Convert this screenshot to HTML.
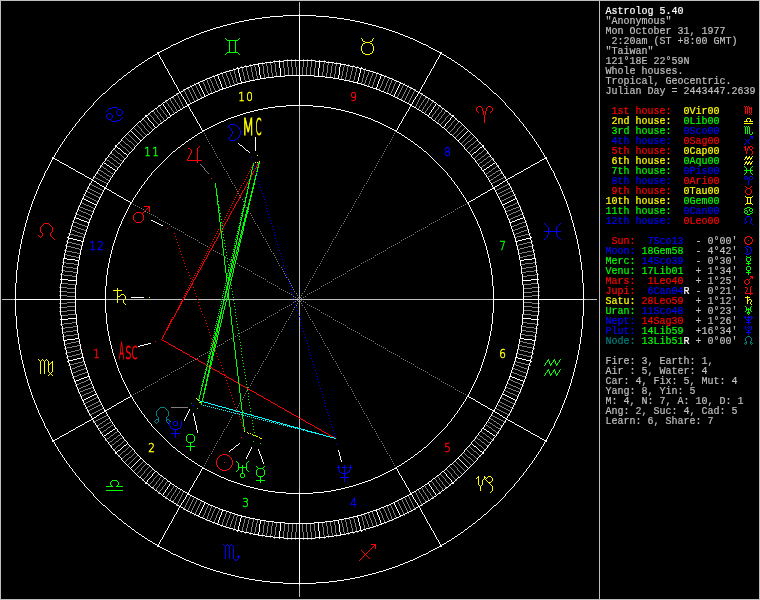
<!DOCTYPE html>
<html><head><meta charset="utf-8"><title>Astrolog 5.40</title>
<style>
html,body{margin:0;padding:0;background:#000}
#chart{will-change:transform;position:relative;width:760px;height:600px;background:#000;overflow:hidden}
#chart svg{position:absolute;left:0;top:0}
#chart svg path{fill:none;stroke-width:1;shape-rendering:crispEdges}
#chart svg text{stroke-width:.45px;vector-effect:non-scaling-stroke}
.hn{font:12.3px "DejaVu Sans Light","Liberation Sans",sans-serif;text-anchor:middle}
.lb2{font:12px "DejaVu Sans Light","Liberation Sans",sans-serif}
#side{position:absolute;left:605.5px;top:7px;margin:0;font:10px/10px "Liberation Mono",monospace;color:#bfbfbf;white-space:pre;-webkit-text-stroke:.2px}
</style></head><body>
<div id="chart">
<svg width="760" height="600" viewBox="0 0 760 600">
<path class="frame" stroke="#bfbfbf" d="M0 0.5h760M0 599.5h760M0.5 1v598M599.5 1v598M759.5 1v598"/>
<path class="axes" stroke="#bfbfbf" d="M2 299.5h595M299.5 2v297M299.5 300v297"/>
<path class="ticks1" stroke="#7f7f7f" d="M129 141.5h2M468 141.5h2M126 144.5h2M471 144.5h2M123 147.5h2M474 147.5h2M118 153.5h2M479 153.5h2M486 153.5h2M112 154.5h2M482 156.5h2M488 156.5h2M110 157.5h2M116 157.5h2M478 159.5h2M484 159.5h2M491 159.5h2M107 160.5h2M114 160.5h2M120 160.5h2M480 162.5h2M487 162.5h2M111 163.5h2M118 163.5h2M483 165.5h2M101 166.5h2M115 166.5h2M496 166.5h2M104 168.5h2M493 168.5h2M99 170.5h2M498 170.5h2M101 171.5h2M108 171.5h2M489 171.5h2M496 171.5h2M97 173.5h2M104 173.5h2M111 173.5h2M486 173.5h2M493 173.5h2M500 173.5h2M100 175.5h2M107 175.5h2M490 175.5h2M497 175.5h2M109 176.5h2M488 176.5h2M94 177.5h2M103 177.5h2M494 177.5h2M503 177.5h2M96 178.5h2M501 178.5h2M98 179.5h2M106 179.5h2M491 179.5h2M499 179.5h2M100 180.5h2M497 180.5h2M102 181.5h2M495 181.5h2M104 182.5h2M493 182.5h2M90 184.5h2M507 184.5h2M92 185.5h2M505 185.5h2M94 186.5h2M503 186.5h2M96 187.5h2M501 187.5h2M510 187.5h2M88 188.5h2M98 188.5h2M499 188.5h2M508 188.5h2M90 189.5h2M100 189.5h2M497 189.5h2M506 189.5h2M92 190.5h2M504 190.5h2M512 190.5h2M86 191.5h2M94 191.5h2M502 191.5h2M510 191.5h2M88 192.5h2M96 192.5h2M500 192.5h2M508 192.5h2M90 193.5h2M98 193.5h2M498 193.5h2M506 193.5h2M92 194.5h2M100 194.5h2M504 194.5h2M514 194.5h2M84 195.5h2M94 195.5h2M502 195.5h2M512 195.5h2M86 196.5h2M96 196.5h2M500 196.5h2M510 196.5h2M88 197.5h2M98 197.5h2M508 197.5h2M90 198.5h2M506 198.5h2M92 199.5h2M504 199.5h2M94 200.5h2M502 200.5h2M96 201.5h2M80 202.5h2M517 202.5h2M82 203.5h2M515 203.5h2M84 204.5h2M513 204.5h2M86 205.5h3M510 205.5h3M78 206.5h2M89 206.5h2M508 206.5h2M519 206.5h2M80 207.5h3M91 207.5h2M506 207.5h2M516 207.5h3M83 208.5h2M93 208.5h2M504 208.5h2M513 208.5h3M77 209.5h2M85 209.5h3M511 209.5h2M520 209.5h2M79 210.5h2M88 210.5h3M508 210.5h3M518 210.5h2M81 211.5h2M91 211.5h2M506 211.5h2M516 211.5h2M83 212.5h3M513 212.5h3M75 213.5h2M86 213.5h2M511 213.5h2M522 213.5h2M77 214.5h2M88 214.5h2M509 214.5h2M520 214.5h2M79 215.5h2M90 215.5h2M507 215.5h2M518 215.5h2M81 216.5h3M515 216.5h3M84 217.5h2M513 217.5h2M86 218.5h2M511 218.5h2M88 219.5h2M509 219.5h2M72 221.5h2M525 221.5h2M74 222.5h3M522 222.5h3M77 223.5h2M519 223.5h3M79 224.5h3M517 224.5h2M71 225.5h2M82 225.5h3M514 225.5h3M526 225.5h2M73 226.5h3M85 226.5h2M512 226.5h2M523 226.5h3M76 227.5h2M520 227.5h3M78 228.5h3M518 228.5h2M70 229.5h2M81 229.5h3M515 229.5h3M527 229.5h2M72 230.5h3M84 230.5h2M513 230.5h2M524 230.5h3M75 231.5h2M521 231.5h3M77 232.5h3M519 232.5h2M68 233.5h2M80 233.5h3M516 233.5h3M529 233.5h2M70 234.5h4M83 234.5h2M514 234.5h2M525 234.5h4M74 235.5h4M521 235.5h4M78 236.5h4M517 236.5h4M82 237.5h2M515 237.5h2M66 241.5h2M531 241.5h2M68 242.5h4M527 242.5h4M72 243.5h4M523 243.5h4M76 244.5h4M519 244.5h4M65 245.5h2M80 245.5h2M517 245.5h2M532 245.5h2M67 246.5h4M528 246.5h4M71 247.5h4M524 247.5h4M75 248.5h4M520 248.5h4M79 249.5h2M518 249.5h2M64 250.5h3M532 250.5h3M67 251.5h5M527 251.5h5M72 252.5h5M522 252.5h5M77 253.5h3M519 253.5h3M64 254.5h3M532 254.5h3M67 255.5h4M527 255.5h5M71 256.5h5M523 256.5h4M76 257.5h3M520 257.5h3M62 262.5h4M533 262.5h4M66 263.5h8M525 263.5h8M74 264.5h4M521 264.5h4M62 266.5h4M533 266.5h4M66 267.5h7M526 267.5h7M73 268.5h4M522 268.5h4M61 270.5h4M534 270.5h4M65 271.5h8M526 271.5h8M73 272.5h4M522 272.5h4M60 274.5h4M535 274.5h4M64 275.5h8M527 275.5h8M72 276.5h4M523 276.5h4M60 283.5h8M531 283.5h8M68 284.5h8M523 284.5h8M59 287.5h8M532 287.5h8M67 288.5h8M524 288.5h8M59 291.5h8M532 291.5h8M67 292.5h8M524 292.5h8M59 295.5h8M532 295.5h8M67 296.5h8M524 296.5h8M67 302.5h8M524 302.5h8M59 303.5h8M532 303.5h8M67 306.5h8M524 306.5h8M59 307.5h8M532 307.5h8M67 310.5h8M524 310.5h8M59 311.5h8M532 311.5h8M68 314.5h8M523 314.5h8M60 315.5h8M531 315.5h8M72 322.5h4M523 322.5h4M64 323.5h8M527 323.5h8M60 324.5h4M535 324.5h4M73 326.5h4M522 326.5h4M65 327.5h8M526 327.5h8M61 328.5h4M534 328.5h4M73 330.5h4M522 330.5h4M66 331.5h7M526 331.5h7M62 332.5h4M533 332.5h4M74 334.5h4M521 334.5h4M66 335.5h8M525 335.5h8M62 336.5h4M533 336.5h4M76 341.5h3M520 341.5h3M71 342.5h5M523 342.5h4M67 343.5h4M527 343.5h5M64 344.5h3M532 344.5h3M77 345.5h3M519 345.5h3M72 346.5h5M522 346.5h5M67 347.5h5M527 347.5h5M64 348.5h3M532 348.5h3M79 349.5h2M518 349.5h2M75 350.5h4M520 350.5h4M71 351.5h4M524 351.5h4M67 352.5h4M528 352.5h4M65 353.5h2M80 353.5h2M517 353.5h2M532 353.5h2M76 354.5h4M519 354.5h4M72 355.5h4M523 355.5h4M68 356.5h4M527 356.5h4M66 357.5h2M531 357.5h2M82 361.5h2M515 361.5h2M78 362.5h4M517 362.5h4M74 363.5h4M521 363.5h4M70 364.5h4M83 364.5h2M514 364.5h2M525 364.5h4M68 365.5h2M80 365.5h3M516 365.5h3M529 365.5h2M77 366.5h3M519 366.5h2M75 367.5h2M521 367.5h3M72 368.5h3M84 368.5h2M513 368.5h2M524 368.5h3M70 369.5h2M81 369.5h3M515 369.5h3M527 369.5h2M78 370.5h3M518 370.5h2M76 371.5h2M520 371.5h3M73 372.5h3M85 372.5h2M512 372.5h2M523 372.5h3M71 373.5h2M82 373.5h3M514 373.5h3M526 373.5h2M79 374.5h3M517 374.5h2M77 375.5h2M519 375.5h3M74 376.5h3M522 376.5h3M72 377.5h2M525 377.5h2M88 379.5h2M509 379.5h2M86 380.5h2M511 380.5h2M84 381.5h2M513 381.5h2M81 382.5h3M515 382.5h3M79 383.5h2M90 383.5h2M507 383.5h2M518 383.5h2M77 384.5h2M88 384.5h2M509 384.5h2M520 384.5h2M75 385.5h2M86 385.5h2M511 385.5h2M522 385.5h2M83 386.5h3M513 386.5h3M81 387.5h2M91 387.5h2M506 387.5h2M516 387.5h2M79 388.5h2M88 388.5h3M508 388.5h3M518 388.5h2M77 389.5h2M85 389.5h3M511 389.5h2M520 389.5h2M83 390.5h2M93 390.5h2M504 390.5h2M513 390.5h3M80 391.5h3M91 391.5h2M506 391.5h2M516 391.5h3M78 392.5h2M89 392.5h2M508 392.5h2M519 392.5h2M86 393.5h3M510 393.5h3M84 394.5h2M513 394.5h2M82 395.5h2M515 395.5h2M80 396.5h2M517 396.5h2M96 397.5h2M94 398.5h2M502 398.5h2M92 399.5h2M504 399.5h2M90 400.5h2M506 400.5h2M88 401.5h2M98 401.5h2M508 401.5h2M86 402.5h2M96 402.5h2M500 402.5h2M510 402.5h2M84 403.5h2M94 403.5h2M502 403.5h2M512 403.5h2M92 404.5h2M100 404.5h2M504 404.5h2M514 404.5h2M90 405.5h2M98 405.5h2M498 405.5h2M506 405.5h2M88 406.5h2M96 406.5h2M500 406.5h2M508 406.5h2M86 407.5h2M94 407.5h2M502 407.5h2M510 407.5h2M92 408.5h2M504 408.5h2M512 408.5h2M90 409.5h2M100 409.5h2M497 409.5h2M506 409.5h2M88 410.5h2M98 410.5h2M499 410.5h2M508 410.5h2M96 411.5h2M501 411.5h2M510 411.5h2M94 412.5h2M503 412.5h2M92 413.5h2M505 413.5h2M90 414.5h2M507 414.5h2M104 416.5h2M493 416.5h2M102 417.5h2M495 417.5h2M100 418.5h2M497 418.5h2M98 419.5h2M106 419.5h2M491 419.5h2M499 419.5h2M96 420.5h2M501 420.5h2M94 421.5h2M103 421.5h2M494 421.5h2M503 421.5h2M109 422.5h2M488 422.5h2M100 423.5h2M107 423.5h2M490 423.5h2M497 423.5h2M97 425.5h2M104 425.5h2M111 425.5h2M486 425.5h2M493 425.5h2M500 425.5h2M101 427.5h2M108 427.5h2M489 427.5h2M496 427.5h2M99 428.5h2M498 428.5h2M104 430.5h2M493 430.5h2M101 432.5h2M115 432.5h2M496 432.5h2M483 433.5h2M111 435.5h2M118 435.5h2M480 436.5h2M487 436.5h2M107 438.5h2M114 438.5h2M120 438.5h2M478 439.5h2M484 439.5h2M491 439.5h2M110 441.5h2M116 441.5h2M482 442.5h2M488 442.5h2M112 444.5h2M118 445.5h2M479 445.5h2M486 445.5h2M123 451.5h2M474 451.5h2M126 454.5h2M471 454.5h2M129 457.5h2M468 457.5h2M83.5 194v1M83.5 404v1M85.5 190v1M85.5 408v1M87.5 187v1M87.5 411v1M89.5 183v1M89.5 415v1M93.5 176v1M93.5 422v1M96.5 172v1M96.5 426v1M98.5 169v1M98.5 429v1M99.5 174v1M99.5 424v1M100.5 165v1M100.5 433v1M102.5 176v1M102.5 190v1M102.5 408v1M102.5 422v1M103.5 167v1M103.5 172v1M103.5 426v1M103.5 431v1M105.5 158v1M105.5 178v1M105.5 420v1M105.5 440v1M106.5 159v1M106.5 169v1M106.5 174v1M106.5 183v1M106.5 415v1M106.5 424v1M106.5 429v1M106.5 439v1M107.5 170v1M107.5 428v1M108.5 155v1M108.5 180v1M108.5 418v1M108.5 443v1M109.5 156v1M109.5 161v1M109.5 437v1M109.5 442v1M110.5 152v1M110.5 162v1M110.5 172v1M110.5 426v1M110.5 436v1M110.5 446v1M111.5 153v1M111.5 177v1M111.5 421v1M111.5 445v1M112.5 158v1M112.5 440v1M113.5 148v1M113.5 159v1M113.5 164v1M113.5 174v1M113.5 424v1M113.5 434v1M113.5 439v1M113.5 450v1M114.5 149v1M114.5 155v1M114.5 165v1M114.5 433v1M114.5 443v1M114.5 449v1M115.5 150v1M115.5 156v1M115.5 442v1M115.5 448v1M116.5 151v1M116.5 161v1M116.5 437v1M116.5 447v1M117.5 152v1M117.5 162v1M117.5 167v1M117.5 431v1M117.5 436v1M117.5 446v1M118.5 142v1M118.5 158v1M118.5 440v1M118.5 456v1M119.5 143v1M119.5 159v1M119.5 439v1M119.5 455v1M120.5 144v1M120.5 154v1M120.5 164v1M120.5 434v1M120.5 444v1M120.5 454v1M121.5 139v1M121.5 145v1M121.5 155v1M121.5 443v1M121.5 453v1M121.5 459v1M122.5 140v1M122.5 146v1M122.5 156v1M122.5 161v1M122.5 437v1M122.5 442v1M122.5 452v1M122.5 458v1M123.5 141v1M123.5 157v1M123.5 441v1M123.5 457v1M124.5 136v1M124.5 142v1M124.5 158v1M124.5 440v1M124.5 456v1M124.5 462v1M125.5 137v1M125.5 143v1M125.5 148v1M125.5 450v1M125.5 455v1M125.5 461v1M126.5 138v1M126.5 149v1M126.5 449v1M126.5 460v1M127.5 133v1M127.5 139v1M127.5 150v1M127.5 448v1M127.5 459v1M127.5 465v1M128.5 134v1M128.5 140v1M128.5 145v1M128.5 151v1M128.5 447v1M128.5 453v1M128.5 458v1M128.5 464v1M129.5 135v1M129.5 146v1M129.5 152v1M129.5 446v1M129.5 452v1M129.5 463v1M130.5 136v1M130.5 147v1M130.5 451v1M130.5 462v1M131.5 137v1M131.5 142v1M131.5 148v1M131.5 450v1M131.5 456v1M131.5 461v1M132.5 138v1M132.5 143v1M132.5 149v1M132.5 449v1M132.5 455v1M132.5 460v1M133.5 127v1M133.5 139v1M133.5 144v1M133.5 454v1M133.5 459v1M133.5 471v1M134.5 128v1M134.5 140v1M134.5 145v1M134.5 453v1M134.5 458v1M134.5 470v1M135.5 129v1M135.5 141v1M135.5 146v1M135.5 452v1M135.5 457v1M135.5 469v1M136.5 124v1M136.5 130v1M136.5 142v1M136.5 456v1M136.5 468v1M136.5 474v1M137.5 125v1M137.5 131v1M137.5 143v1M137.5 455v1M137.5 467v1M137.5 473v1M138.5 126v1M138.5 132v1M138.5 466v1M138.5 472v1M139.5 121v1M139.5 127v1M139.5 133v1M139.5 465v1M139.5 471v1M139.5 477v1M140.5 122v1M140.5 128v1M140.5 134v1M140.5 464v1M140.5 470v1M140.5 476v1M141.5 123v1M141.5 129v2M141.5 135v1M141.5 463v1M141.5 468v2M141.5 475v1M142.5 118v1M142.5 124v1M142.5 131v1M142.5 136v1M142.5 462v1M142.5 467v1M142.5 474v1M142.5 480v1M143.5 119v1M143.5 125v1M143.5 132v1M143.5 137v1M143.5 461v1M143.5 466v1M143.5 473v1M143.5 479v1M144.5 120v1M144.5 126v2M144.5 133v1M144.5 465v1M144.5 471v2M144.5 478v1M145.5 121v1M145.5 128v1M145.5 134v1M145.5 464v1M145.5 470v1M145.5 477v1M146.5 122v1M146.5 129v1M146.5 135v1M146.5 463v1M146.5 469v1M146.5 476v1M147.5 123v2M147.5 130v1M147.5 468v1M147.5 474v2M148.5 113v1M148.5 125v1M148.5 131v1M148.5 467v1M148.5 473v1M148.5 485v1M149.5 114v1M149.5 126v1M149.5 132v1M149.5 466v1M149.5 472v1M149.5 484v1M150.5 115v1M150.5 127v1M150.5 471v1M150.5 483v1M151.5 116v1M151.5 128v1M151.5 470v1M151.5 482v1M152.5 110v1M152.5 117v1M152.5 129v1M152.5 469v1M152.5 481v1M152.5 488v1M153.5 111v1M153.5 118v2M153.5 479v2M153.5 486v2M154.5 112v2M154.5 120v1M154.5 478v1M154.5 485v1M155.5 108v1M155.5 114v1M155.5 121v1M155.5 477v1M155.5 484v1M155.5 490v1M156.5 109v1M156.5 115v1M156.5 122v1M156.5 476v1M156.5 482v2M156.5 488v2M157.5 110v2M157.5 116v2M157.5 123v1M157.5 475v1M157.5 481v1M157.5 487v1M158.5 105v1M158.5 112v1M158.5 118v1M158.5 124v1M158.5 474v1M158.5 480v1M158.5 486v1M158.5 493v1M159.5 106v1M159.5 113v1M159.5 119v1M159.5 478v2M159.5 484v2M159.5 491v2M160.5 107v2M160.5 114v2M160.5 120v2M160.5 477v1M160.5 483v1M160.5 490v1M161.5 109v1M161.5 116v1M161.5 122v1M161.5 476v1M161.5 482v1M161.5 489v1M162.5 110v1M162.5 117v1M162.5 480v2M162.5 487v2M163.5 111v2M163.5 118v2M163.5 479v1M163.5 486v1M164.5 113v1M164.5 120v1M164.5 478v1M164.5 485v1M165.5 100v1M165.5 114v1M165.5 483v2M165.5 498v1M166.5 101v2M166.5 115v2M166.5 482v1M166.5 496v2M167.5 103v1M167.5 117v1M167.5 481v1M167.5 495v1M168.5 104v2M168.5 493v2M169.5 98v1M169.5 106v1M169.5 492v1M169.5 500v1M170.5 99v2M170.5 107v1M170.5 491v1M170.5 498v2M171.5 101v2M171.5 108v2M171.5 489v2M171.5 496v2M172.5 96v1M172.5 103v1M172.5 110v1M172.5 488v1M172.5 495v1M172.5 502v1M173.5 97v2M173.5 104v2M173.5 111v2M173.5 486v2M173.5 493v2M173.5 500v2M174.5 99v1M174.5 106v1M174.5 113v1M174.5 485v1M174.5 492v1M174.5 499v1M175.5 100v2M175.5 107v2M175.5 490v2M175.5 497v2M176.5 93v1M176.5 102v1M176.5 109v2M176.5 488v2M176.5 496v1M176.5 505v1M177.5 94v2M177.5 103v2M177.5 111v1M177.5 487v1M177.5 494v2M177.5 503v2M178.5 96v2M178.5 105v1M178.5 493v1M178.5 501v2M179.5 98v2M179.5 106v2M179.5 491v2M179.5 499v2M180.5 100v2M180.5 108v1M180.5 490v1M180.5 497v2M181.5 102v2M181.5 495v2M182.5 104v2M182.5 493v2M183.5 89v1M183.5 106v1M183.5 492v1M183.5 509v1M184.5 90v2M184.5 507v2M185.5 92v2M185.5 505v2M186.5 94v2M186.5 503v2M187.5 87v1M187.5 96v2M187.5 501v2M187.5 510v2M188.5 88v2M188.5 98v2M188.5 499v2M188.5 508v2M189.5 90v2M189.5 100v2M189.5 497v2M189.5 506v2M190.5 85v1M190.5 92v2M190.5 102v1M190.5 496v1M190.5 504v2M190.5 512v2M191.5 86v2M191.5 94v2M191.5 502v2M191.5 510v2M192.5 88v2M192.5 96v2M192.5 500v2M192.5 508v2M193.5 90v2M193.5 98v2M193.5 498v2M193.5 506v2M194.5 83v1M194.5 92v2M194.5 100v2M194.5 497v1M194.5 504v2M194.5 514v2M195.5 84v2M195.5 94v2M195.5 502v2M195.5 512v2M196.5 86v2M196.5 96v2M196.5 500v2M196.5 510v2M197.5 88v2M197.5 98v2M197.5 499v1M197.5 508v2M198.5 90v2M198.5 506v2M199.5 92v2M199.5 504v2M200.5 94v2M200.5 502v2M201.5 96v2M201.5 501v1M202.5 80v2M202.5 517v2M203.5 82v2M203.5 515v2M204.5 84v2M204.5 513v2M205.5 86v3M205.5 510v3M206.5 78v2M206.5 89v2M206.5 508v2M206.5 519v2M207.5 80v3M207.5 91v2M207.5 506v2M207.5 516v3M208.5 83v2M208.5 93v2M208.5 504v2M208.5 513v3M209.5 77v2M209.5 85v3M209.5 511v2M209.5 520v2M210.5 79v2M210.5 88v3M210.5 508v3M210.5 518v2M211.5 81v2M211.5 91v2M211.5 506v2M211.5 516v2M212.5 83v3M212.5 513v3M213.5 75v2M213.5 86v2M213.5 511v2M213.5 522v2M214.5 77v2M214.5 88v2M214.5 509v2M214.5 520v2M215.5 79v2M215.5 90v2M215.5 507v2M215.5 518v2M216.5 81v3M216.5 515v3M217.5 84v2M217.5 513v2M218.5 86v2M218.5 511v2M219.5 88v2M219.5 509v2M221.5 72v2M221.5 525v2M222.5 74v3M222.5 522v3M223.5 77v2M223.5 519v3M224.5 79v3M224.5 517v2M225.5 71v2M225.5 82v3M225.5 514v3M225.5 526v2M226.5 73v3M226.5 85v2M226.5 512v2M226.5 523v3M227.5 76v2M227.5 520v3M228.5 78v3M228.5 518v2M229.5 70v2M229.5 81v3M229.5 515v3M229.5 527v2M230.5 72v3M230.5 84v2M230.5 513v2M230.5 524v3M231.5 75v2M231.5 521v3M232.5 77v3M232.5 519v2M233.5 68v2M233.5 80v3M233.5 516v3M233.5 529v2M234.5 70v4M234.5 83v2M234.5 514v2M234.5 525v4M235.5 74v4M235.5 521v4M236.5 78v4M236.5 517v4M237.5 82v2M237.5 515v2M241.5 66v2M241.5 531v2M242.5 68v4M242.5 527v4M243.5 72v4M243.5 523v4M244.5 76v4M244.5 519v4M245.5 65v2M245.5 80v2M245.5 517v2M245.5 532v2M246.5 67v4M246.5 528v4M247.5 71v4M247.5 524v4M248.5 75v4M248.5 520v4M249.5 79v2M249.5 518v2M250.5 64v3M250.5 532v3M251.5 67v5M251.5 527v5M252.5 72v5M252.5 522v5M253.5 77v3M253.5 519v3M254.5 64v3M254.5 532v3M255.5 67v4M255.5 527v5M256.5 71v5M256.5 523v4M257.5 76v3M257.5 520v3M262.5 62v4M262.5 533v4M263.5 66v8M263.5 525v8M264.5 74v4M264.5 521v4M266.5 62v4M266.5 533v4M267.5 66v7M267.5 526v7M268.5 73v4M268.5 522v4M270.5 61v4M270.5 534v4M271.5 65v8M271.5 526v8M272.5 73v4M272.5 522v4M274.5 60v4M274.5 535v4M275.5 64v8M275.5 527v8M276.5 72v4M276.5 523v4M283.5 60v8M283.5 531v8M284.5 68v8M284.5 523v8M287.5 59v8M287.5 532v8M288.5 67v8M288.5 524v8M291.5 59v8M291.5 532v8M292.5 67v8M292.5 524v8M295.5 59v8M295.5 532v8M296.5 67v8M296.5 524v8M302.5 67v8M302.5 524v8M303.5 59v8M303.5 532v8M306.5 67v8M306.5 524v8M307.5 59v8M307.5 532v8M310.5 67v8M310.5 524v8M311.5 59v8M311.5 532v8M314.5 68v8M314.5 523v8M315.5 60v8M315.5 531v8M322.5 72v4M322.5 523v4M323.5 64v8M323.5 527v8M324.5 60v4M324.5 535v4M326.5 73v4M326.5 522v4M327.5 65v8M327.5 526v8M328.5 61v4M328.5 534v4M330.5 73v4M330.5 522v4M331.5 66v7M331.5 526v7M332.5 62v4M332.5 533v4M334.5 74v4M334.5 521v4M335.5 66v8M335.5 525v8M336.5 62v4M336.5 533v4M341.5 76v3M341.5 520v3M342.5 71v5M342.5 523v4M343.5 67v4M343.5 527v5M344.5 64v3M344.5 532v3M345.5 77v3M345.5 519v3M346.5 72v5M346.5 522v5M347.5 67v5M347.5 527v5M348.5 64v3M348.5 532v3M349.5 79v2M349.5 518v2M350.5 75v4M350.5 520v4M351.5 71v4M351.5 524v4M352.5 67v4M352.5 528v4M353.5 65v2M353.5 80v2M353.5 517v2M353.5 532v2M354.5 76v4M354.5 519v4M355.5 72v4M355.5 523v4M356.5 68v4M356.5 527v4M357.5 66v2M357.5 531v2M361.5 82v2M361.5 515v2M362.5 78v4M362.5 517v4M363.5 74v4M363.5 521v4M364.5 70v4M364.5 83v2M364.5 514v2M364.5 525v4M365.5 68v2M365.5 80v3M365.5 516v3M365.5 529v2M366.5 77v3M366.5 519v2M367.5 75v2M367.5 521v3M368.5 72v3M368.5 84v2M368.5 513v2M368.5 524v3M369.5 70v2M369.5 81v3M369.5 515v3M369.5 527v2M370.5 78v3M370.5 518v2M371.5 76v2M371.5 520v3M372.5 73v3M372.5 85v2M372.5 512v2M372.5 523v3M373.5 71v2M373.5 82v3M373.5 514v3M373.5 526v2M374.5 79v3M374.5 517v2M375.5 77v2M375.5 519v3M376.5 74v3M376.5 522v3M377.5 72v2M377.5 525v2M379.5 88v2M379.5 509v2M380.5 86v2M380.5 511v2M381.5 84v2M381.5 513v2M382.5 81v3M382.5 515v3M383.5 79v2M383.5 90v2M383.5 507v2M383.5 518v2M384.5 77v2M384.5 88v2M384.5 509v2M384.5 520v2M385.5 75v2M385.5 86v2M385.5 511v2M385.5 522v2M386.5 83v3M386.5 513v3M387.5 81v2M387.5 91v2M387.5 506v2M387.5 516v2M388.5 79v2M388.5 88v3M388.5 508v3M388.5 518v2M389.5 77v2M389.5 85v3M389.5 511v2M389.5 520v2M390.5 83v2M390.5 93v2M390.5 504v2M390.5 513v3M391.5 80v3M391.5 91v2M391.5 506v2M391.5 516v3M392.5 78v2M392.5 89v2M392.5 508v2M392.5 519v2M393.5 86v3M393.5 510v3M394.5 84v2M394.5 513v2M395.5 82v2M395.5 515v2M396.5 80v2M396.5 517v2M397.5 96v2M397.5 501v1M398.5 94v2M398.5 502v2M399.5 92v2M399.5 504v2M400.5 90v2M400.5 506v2M401.5 88v2M401.5 98v2M401.5 499v1M401.5 508v2M402.5 86v2M402.5 96v2M402.5 500v2M402.5 510v2M403.5 84v2M403.5 94v2M403.5 502v2M403.5 512v2M404.5 83v1M404.5 92v2M404.5 100v2M404.5 497v1M404.5 504v2M404.5 514v2M405.5 90v2M405.5 98v2M405.5 498v2M405.5 506v2M406.5 88v2M406.5 96v2M406.5 500v2M406.5 508v2M407.5 86v2M407.5 94v2M407.5 502v2M407.5 510v2M408.5 85v1M408.5 92v2M408.5 102v1M408.5 496v1M408.5 504v2M408.5 512v2M409.5 90v2M409.5 100v2M409.5 497v2M409.5 506v2M410.5 88v2M410.5 98v2M410.5 499v2M410.5 508v2M411.5 87v1M411.5 96v2M411.5 501v2M411.5 510v2M412.5 94v2M412.5 503v2M413.5 92v2M413.5 505v2M414.5 90v2M414.5 507v2M415.5 89v1M415.5 106v1M415.5 492v1M415.5 509v1M416.5 104v2M416.5 493v2M417.5 102v2M417.5 495v2M418.5 100v2M418.5 108v1M418.5 490v1M418.5 497v2M419.5 98v2M419.5 106v2M419.5 491v2M419.5 499v2M420.5 96v2M420.5 105v1M420.5 493v1M420.5 501v2M421.5 94v2M421.5 103v2M421.5 111v1M421.5 487v1M421.5 494v2M421.5 503v2M422.5 93v1M422.5 102v1M422.5 109v2M422.5 488v2M422.5 496v1M422.5 505v1M423.5 100v2M423.5 107v2M423.5 490v2M423.5 497v2M424.5 99v1M424.5 106v1M424.5 113v1M424.5 485v1M424.5 492v1M424.5 499v1M425.5 97v2M425.5 104v2M425.5 111v2M425.5 486v2M425.5 493v2M425.5 500v2M426.5 96v1M426.5 103v1M426.5 110v1M426.5 488v1M426.5 495v1M426.5 502v1M427.5 101v2M427.5 108v2M427.5 489v2M427.5 496v2M428.5 99v2M428.5 107v1M428.5 491v1M428.5 498v2M429.5 98v1M429.5 106v1M429.5 492v1M429.5 500v1M430.5 104v2M430.5 493v2M431.5 103v1M431.5 117v1M431.5 481v1M431.5 495v1M432.5 101v2M432.5 115v2M432.5 482v1M432.5 496v2M433.5 100v1M433.5 114v1M433.5 483v2M433.5 498v1M434.5 113v1M434.5 120v1M434.5 478v1M434.5 485v1M435.5 111v2M435.5 118v2M435.5 479v1M435.5 486v1M436.5 110v1M436.5 117v1M436.5 480v2M436.5 487v2M437.5 109v1M437.5 116v1M437.5 122v1M437.5 476v1M437.5 482v1M437.5 489v1M438.5 107v2M438.5 114v2M438.5 120v2M438.5 477v1M438.5 483v1M438.5 490v1M439.5 106v1M439.5 113v1M439.5 119v1M439.5 478v2M439.5 484v2M439.5 491v2M440.5 105v1M440.5 112v1M440.5 118v1M440.5 124v1M440.5 474v1M440.5 480v1M440.5 486v1M440.5 493v1M441.5 110v2M441.5 116v2M441.5 123v1M441.5 475v1M441.5 481v1M441.5 487v1M442.5 109v1M442.5 115v1M442.5 122v1M442.5 476v1M442.5 482v2M442.5 488v2M443.5 108v1M443.5 114v1M443.5 121v1M443.5 477v1M443.5 484v1M443.5 490v1M444.5 112v2M444.5 120v1M444.5 478v1M444.5 485v1M445.5 111v1M445.5 118v2M445.5 479v2M445.5 486v2M446.5 110v1M446.5 117v1M446.5 129v1M446.5 469v1M446.5 481v1M446.5 488v1M447.5 116v1M447.5 128v1M447.5 470v1M447.5 482v1M448.5 115v1M448.5 127v1M448.5 471v1M448.5 483v1M449.5 114v1M449.5 126v1M449.5 132v1M449.5 466v1M449.5 472v1M449.5 484v1M450.5 113v1M450.5 125v1M450.5 131v1M450.5 467v1M450.5 473v1M450.5 485v1M451.5 123v2M451.5 130v1M451.5 468v1M451.5 474v2M452.5 122v1M452.5 129v1M452.5 135v1M452.5 463v1M452.5 469v1M452.5 476v1M453.5 121v1M453.5 128v1M453.5 134v1M453.5 464v1M453.5 470v1M453.5 477v1M454.5 120v1M454.5 126v2M454.5 133v1M454.5 465v1M454.5 471v2M454.5 478v1M455.5 119v1M455.5 125v1M455.5 132v1M455.5 137v1M455.5 461v1M455.5 466v1M455.5 473v1M455.5 479v1M456.5 118v1M456.5 124v1M456.5 131v1M456.5 136v1M456.5 462v1M456.5 467v1M456.5 474v1M456.5 480v1M457.5 123v1M457.5 129v2M457.5 135v1M457.5 463v1M457.5 468v2M457.5 475v1M458.5 122v1M458.5 128v1M458.5 134v1M458.5 464v1M458.5 470v1M458.5 476v1M459.5 121v1M459.5 127v1M459.5 133v1M459.5 465v1M459.5 471v1M459.5 477v1M460.5 126v1M460.5 132v1M460.5 466v1M460.5 472v1M461.5 125v1M461.5 131v1M461.5 143v1M461.5 455v1M461.5 467v1M461.5 473v1M462.5 124v1M462.5 130v1M462.5 142v1M462.5 456v1M462.5 468v1M462.5 474v1M463.5 129v1M463.5 141v1M463.5 146v1M463.5 452v1M463.5 457v1M463.5 469v1M464.5 128v1M464.5 140v1M464.5 145v1M464.5 453v1M464.5 458v1M464.5 470v1M465.5 127v1M465.5 139v1M465.5 144v1M465.5 454v1M465.5 459v1M465.5 471v1M466.5 138v1M466.5 143v1M466.5 149v1M466.5 449v1M466.5 455v1M466.5 460v1M467.5 137v1M467.5 142v1M467.5 148v1M467.5 450v1M467.5 456v1M467.5 461v1M468.5 136v1M468.5 147v1M468.5 451v1M468.5 462v1M469.5 135v1M469.5 146v1M469.5 152v1M469.5 446v1M469.5 452v1M469.5 463v1M470.5 134v1M470.5 140v1M470.5 145v1M470.5 151v1M470.5 447v1M470.5 453v1M470.5 458v1M470.5 464v1M471.5 133v1M471.5 139v1M471.5 150v1M471.5 448v1M471.5 459v1M471.5 465v1M472.5 138v1M472.5 149v1M472.5 449v1M472.5 460v1M473.5 137v1M473.5 143v1M473.5 148v1M473.5 450v1M473.5 455v1M473.5 461v1M474.5 136v1M474.5 142v1M474.5 158v1M474.5 440v1M474.5 456v1M474.5 462v1M475.5 141v1M475.5 157v1M475.5 441v1M475.5 457v1M476.5 140v1M476.5 146v1M476.5 156v1M476.5 161v1M476.5 437v1M476.5 442v1M476.5 452v1M476.5 458v1M477.5 139v1M477.5 145v1M477.5 155v1M477.5 160v1M477.5 438v1M477.5 443v1M477.5 453v1M477.5 459v1M478.5 144v1M478.5 154v1M478.5 164v1M478.5 434v1M478.5 444v1M478.5 454v1M479.5 143v1M479.5 163v1M479.5 435v1M479.5 455v1M480.5 142v1M480.5 158v1M480.5 440v1M480.5 456v1M481.5 152v1M481.5 157v1M481.5 167v1M481.5 431v1M481.5 441v1M481.5 446v1M482.5 151v1M482.5 161v1M482.5 166v1M482.5 432v1M482.5 437v1M482.5 447v1M483.5 150v1M483.5 160v1M483.5 438v1M483.5 448v1M484.5 149v1M484.5 155v1M484.5 443v1M484.5 449v1M485.5 148v1M485.5 154v1M485.5 164v1M485.5 174v1M485.5 424v1M485.5 434v1M485.5 444v1M485.5 450v1M486.5 158v1M486.5 163v1M486.5 435v1M486.5 440v1M487.5 157v1M487.5 177v1M487.5 421v1M487.5 441v1M488.5 152v1M488.5 172v1M488.5 426v1M488.5 446v1M489.5 161v1M489.5 437v1M490.5 155v1M490.5 160v1M490.5 180v1M490.5 418v1M490.5 438v1M490.5 443v1M491.5 170v1M491.5 428v1M492.5 169v1M492.5 174v1M492.5 183v1M492.5 415v1M492.5 424v1M492.5 429v1M493.5 158v1M493.5 178v1M493.5 420v1M493.5 440v1M495.5 167v1M495.5 172v1M495.5 426v1M495.5 431v1M496.5 176v1M496.5 190v1M496.5 408v1M496.5 422v1M497.5 194v1M497.5 404v1M498.5 165v1M498.5 433v1M499.5 174v1M499.5 197v1M499.5 401v1M499.5 424v1M500.5 169v1M500.5 429v1M501.5 201v1M501.5 397v1M502.5 172v1M502.5 426v1M505.5 176v1M505.5 422v1M509.5 183v1M509.5 415v1"/>
<path class="ticks5" stroke="#fff" d="M480 147.5h2M118 148.5h2M474 152.5h2M124 153.5h2M104 163.5h2M493 163.5h2M107 165.5h2M490 165.5h2M110 167.5h2M487 167.5h2M113 169.5h2M484 169.5h2M92 180.5h2M505 180.5h2M94 181.5h2M503 181.5h2M97 183.5h2M500 183.5h2M100 185.5h2M497 185.5h2M102 186.5h2M495 186.5h2M82 198.5h2M515 198.5h2M84 199.5h2M513 199.5h2M86 200.5h2M511 200.5h2M88 201.5h2M509 201.5h2M90 202.5h2M507 202.5h2M92 203.5h2M505 203.5h2M94 204.5h2M503 204.5h2M74 217.5h2M523 217.5h2M76 218.5h3M520 218.5h3M79 219.5h2M517 219.5h3M81 220.5h3M515 220.5h2M84 221.5h3M512 221.5h3M87 222.5h2M510 222.5h2M67 237.5h2M530 237.5h2M69 238.5h4M526 238.5h4M73 239.5h4M522 239.5h4M77 240.5h4M518 240.5h4M81 241.5h2M516 241.5h2M63 258.5h4M532 258.5h4M67 259.5h8M524 259.5h8M75 260.5h4M520 260.5h4M60 279.5h8M531 279.5h8M68 280.5h8M523 280.5h8M59 299.5h16M524 299.5h16M68 318.5h8M523 318.5h8M60 319.5h8M531 319.5h8M75 338.5h4M520 338.5h4M67 339.5h8M524 339.5h8M63 340.5h4M532 340.5h4M81 357.5h2M516 357.5h2M77 358.5h4M518 358.5h4M73 359.5h4M522 359.5h4M69 360.5h4M526 360.5h4M67 361.5h2M530 361.5h2M87 376.5h2M510 376.5h2M84 377.5h3M512 377.5h3M81 378.5h3M515 378.5h2M79 379.5h2M517 379.5h3M76 380.5h3M520 380.5h3M74 381.5h2M523 381.5h2M94 394.5h2M503 394.5h2M92 395.5h2M505 395.5h2M90 396.5h2M507 396.5h2M88 397.5h2M509 397.5h2M86 398.5h2M511 398.5h2M84 399.5h2M513 399.5h2M82 400.5h2M515 400.5h2M102 412.5h2M495 412.5h2M100 413.5h2M497 413.5h2M97 415.5h2M500 415.5h2M94 417.5h2M503 417.5h2M92 418.5h2M505 418.5h2M113 429.5h2M484 429.5h2M110 431.5h2M487 431.5h2M107 433.5h2M490 433.5h2M104 435.5h2M493 435.5h2M124 445.5h2M474 446.5h2M118 450.5h2M480 451.5h2M91.5 179v1M91.5 419v1M96.5 182v1M96.5 416v1M99.5 184v1M99.5 414v1M103.5 162v1M103.5 436v1M104.5 187v1M104.5 411v1M106.5 164v1M106.5 434v1M109.5 166v1M109.5 432v1M112.5 168v1M112.5 430v1M115.5 145v1M115.5 170v1M115.5 428v1M115.5 453v1M116.5 146v1M116.5 452v1M117.5 147v1M117.5 451v1M120.5 149v1M120.5 449v1M121.5 150v1M121.5 448v1M122.5 151v1M122.5 447v1M123.5 152v1M123.5 446v1M126.5 154v1M126.5 444v1M127.5 155v1M127.5 443v1M130.5 130v1M130.5 468v1M131.5 131v1M131.5 467v1M132.5 132v1M132.5 466v1M133.5 133v1M133.5 465v1M134.5 134v1M134.5 464v1M135.5 135v1M135.5 463v1M136.5 136v1M136.5 462v1M137.5 137v1M137.5 461v1M138.5 138v1M138.5 460v1M139.5 139v1M139.5 459v1M140.5 140v1M140.5 458v1M145.5 115v1M145.5 483v1M146.5 116v1M146.5 482v1M147.5 117v1M147.5 480v2M148.5 118v2M148.5 479v1M149.5 120v1M149.5 478v1M150.5 121v1M150.5 477v1M151.5 122v1M151.5 476v1M152.5 123v1M152.5 474v2M153.5 124v2M153.5 473v1M154.5 126v1M154.5 472v1M155.5 127v1M155.5 471v1M162.5 103v1M162.5 495v1M163.5 104v2M163.5 493v2M164.5 106v1M164.5 492v1M165.5 107v2M165.5 490v2M166.5 109v1M166.5 489v1M167.5 110v2M167.5 487v2M168.5 112v1M168.5 486v1M169.5 113v2M169.5 484v2M170.5 115v1M170.5 483v1M179.5 91v1M179.5 507v1M180.5 92v2M180.5 505v2M181.5 94v2M181.5 503v2M182.5 96v1M182.5 502v1M183.5 97v2M183.5 500v2M184.5 99v1M184.5 499v1M185.5 100v2M185.5 497v2M186.5 102v2M186.5 495v2M187.5 104v1M187.5 494v1M198.5 82v2M198.5 515v2M199.5 84v2M199.5 513v2M200.5 86v2M200.5 511v2M201.5 88v2M201.5 509v2M202.5 90v2M202.5 507v2M203.5 92v2M203.5 505v2M204.5 94v2M204.5 503v2M217.5 74v2M217.5 523v2M218.5 76v3M218.5 520v3M219.5 79v2M219.5 517v3M220.5 81v3M220.5 515v2M221.5 84v3M221.5 512v3M222.5 87v2M222.5 510v2M237.5 67v2M237.5 530v2M238.5 69v4M238.5 526v4M239.5 73v4M239.5 522v4M240.5 77v4M240.5 518v4M241.5 81v2M241.5 516v2M258.5 63v4M258.5 532v4M259.5 67v8M259.5 524v8M260.5 75v4M260.5 520v4M279.5 60v8M279.5 531v8M280.5 68v8M280.5 523v8M299.5 59v16M299.5 524v16M318.5 68v8M318.5 523v8M319.5 60v8M319.5 531v8M338.5 75v4M338.5 520v4M339.5 67v8M339.5 524v8M340.5 63v4M340.5 532v4M357.5 81v2M357.5 516v2M358.5 77v4M358.5 518v4M359.5 73v4M359.5 522v4M360.5 69v4M360.5 526v4M361.5 67v2M361.5 530v2M376.5 87v2M376.5 510v2M377.5 84v3M377.5 512v3M378.5 81v3M378.5 515v2M379.5 79v2M379.5 517v3M380.5 76v3M380.5 520v3M381.5 74v2M381.5 523v2M394.5 94v2M394.5 503v2M395.5 92v2M395.5 505v2M396.5 90v2M396.5 507v2M397.5 88v2M397.5 509v2M398.5 86v2M398.5 511v2M399.5 84v2M399.5 513v2M400.5 82v2M400.5 515v2M411.5 104v1M411.5 494v1M412.5 102v2M412.5 495v2M413.5 100v2M413.5 497v2M414.5 99v1M414.5 499v1M415.5 97v2M415.5 500v2M416.5 96v1M416.5 502v1M417.5 94v2M417.5 503v2M418.5 92v2M418.5 505v2M419.5 91v1M419.5 507v1M428.5 115v1M428.5 483v1M429.5 113v2M429.5 484v2M430.5 112v1M430.5 486v1M431.5 110v2M431.5 487v2M432.5 109v1M432.5 489v1M433.5 107v2M433.5 490v2M434.5 106v1M434.5 492v1M435.5 104v2M435.5 493v2M436.5 103v1M436.5 495v1M443.5 127v1M443.5 471v1M444.5 126v1M444.5 472v1M445.5 124v2M445.5 473v1M446.5 123v1M446.5 474v2M447.5 122v1M447.5 476v1M448.5 121v1M448.5 477v1M449.5 120v1M449.5 478v1M450.5 118v2M450.5 479v1M451.5 117v1M451.5 480v2M452.5 116v1M452.5 482v1M453.5 115v1M453.5 483v1M458.5 140v1M458.5 458v1M459.5 139v1M459.5 459v1M460.5 138v1M460.5 460v1M461.5 137v1M461.5 461v1M462.5 136v1M462.5 462v1M463.5 135v1M463.5 463v1M464.5 134v1M464.5 464v1M465.5 133v1M465.5 465v1M466.5 132v1M466.5 466v1M467.5 131v1M467.5 467v1M468.5 130v1M468.5 468v1M471.5 155v1M471.5 443v1M472.5 154v1M472.5 444v1M473.5 153v1M473.5 445v1M476.5 151v1M476.5 447v1M477.5 150v1M477.5 448v1M478.5 149v1M478.5 449v1M479.5 148v1M479.5 450v1M482.5 146v1M482.5 452v1M483.5 145v1M483.5 170v1M483.5 428v1M483.5 453v1M486.5 168v1M486.5 430v1M489.5 166v1M489.5 432v1M492.5 164v1M492.5 434v1M494.5 187v1M494.5 411v1M495.5 162v1M495.5 436v1M499.5 184v1M499.5 414v1M502.5 182v1M502.5 416v1M507.5 179v1M507.5 419v1"/>
<path class="ring" stroke="#fff" d="M283 15.5h33M270 16.5h13M316 16.5h13M262 17.5h8M329 17.5h8M255 18.5h7M337 18.5h7M249 19.5h6M344 19.5h6M244 20.5h5M350 20.5h5M239 21.5h5M355 21.5h5M235 22.5h4M360 22.5h4M231 23.5h4M364 23.5h4M227 24.5h4M368 24.5h4M223 25.5h4M372 25.5h4M220 26.5h3M376 26.5h3M216 27.5h4M379 27.5h4M213 28.5h3M383 28.5h3M210 29.5h3M386 29.5h3M207 30.5h3M389 30.5h3M204 31.5h3M392 31.5h3M201 32.5h3M395 32.5h3M199 33.5h2M398 33.5h2M196 34.5h3M400 34.5h3M194 35.5h2M403 35.5h2M191 36.5h3M405 36.5h3M189 37.5h2M408 37.5h2M186 38.5h3M410 38.5h3M184 39.5h2M413 39.5h2M182 40.5h2M415 40.5h2M180 41.5h2M417 41.5h2M178 42.5h2M419 42.5h2M176 43.5h2M421 43.5h2M173 44.5h3M423 44.5h3M171 45.5h2M426 45.5h2M168 47.5h2M429 47.5h2M166 48.5h2M431 48.5h2M164 49.5h2M433 49.5h2M162 50.5h2M435 50.5h2M160 51.5h2M437 51.5h2M158 52.5h2M439 52.5h2M155 54.5h2M442 54.5h2M153 55.5h2M444 55.5h2M150 57.5h2M447 57.5h2M148 58.5h2M449 58.5h2M145 60.5h2M452 60.5h2M142 62.5h2M455 62.5h2M139 64.5h2M458 64.5h2M136 66.5h2M461 66.5h2M132 69.5h2M465 69.5h2M128 72.5h2M469 72.5h2M124 75.5h2M473 75.5h2M119 79.5h2M478 79.5h2M113 84.5h2M484 84.5h2M103 93.5h2M494 93.5h2M103 505.5h2M494 505.5h2M113 514.5h2M484 514.5h2M119 519.5h2M478 519.5h2M124 523.5h2M473 523.5h2M128 526.5h2M469 526.5h2M132 529.5h2M465 529.5h2M136 532.5h2M461 532.5h2M139 534.5h2M458 534.5h2M142 536.5h2M455 536.5h2M145 538.5h2M452 538.5h2M148 540.5h2M449 540.5h2M150 541.5h2M447 541.5h2M153 543.5h2M444 543.5h2M155 544.5h2M442 544.5h2M158 546.5h2M439 546.5h2M160 547.5h2M437 547.5h2M162 548.5h2M435 548.5h2M164 549.5h2M433 549.5h2M166 550.5h2M431 550.5h2M168 551.5h2M429 551.5h2M171 553.5h2M426 553.5h2M173 554.5h3M423 554.5h3M176 555.5h2M421 555.5h2M178 556.5h2M419 556.5h2M180 557.5h2M417 557.5h2M182 558.5h2M415 558.5h2M184 559.5h2M413 559.5h2M186 560.5h3M410 560.5h3M189 561.5h2M408 561.5h2M191 562.5h3M405 562.5h3M194 563.5h2M403 563.5h2M196 564.5h3M400 564.5h3M199 565.5h2M398 565.5h2M201 566.5h3M395 566.5h3M204 567.5h3M392 567.5h3M207 568.5h3M389 568.5h3M210 569.5h3M386 569.5h3M213 570.5h3M383 570.5h3M216 571.5h4M379 571.5h4M220 572.5h3M376 572.5h3M223 573.5h4M372 573.5h4M227 574.5h4M368 574.5h4M231 575.5h4M364 575.5h4M235 576.5h4M360 576.5h4M239 577.5h5M355 577.5h5M244 578.5h5M350 578.5h5M249 579.5h6M344 579.5h6M255 580.5h7M337 580.5h7M262 581.5h8M329 581.5h8M270 582.5h13M316 582.5h13M283 583.5h33M15.5 283v33M16.5 270v13M16.5 316v13M17.5 262v8M17.5 329v8M18.5 255v7M18.5 337v7M19.5 249v6M19.5 344v6M20.5 244v5M20.5 350v5M21.5 239v5M21.5 355v5M22.5 235v4M22.5 360v4M23.5 231v4M23.5 364v4M24.5 227v4M24.5 368v4M25.5 223v4M25.5 372v4M26.5 220v3M26.5 376v3M27.5 216v4M27.5 379v4M28.5 213v3M28.5 383v3M29.5 210v3M29.5 386v3M30.5 207v3M30.5 389v3M31.5 204v3M31.5 392v3M32.5 201v3M32.5 395v3M33.5 199v2M33.5 398v2M34.5 196v3M34.5 400v3M35.5 194v2M35.5 403v2M36.5 191v3M36.5 405v3M37.5 189v2M37.5 408v2M38.5 186v3M38.5 410v3M39.5 184v2M39.5 413v2M40.5 182v2M40.5 415v2M41.5 180v2M41.5 417v2M42.5 178v2M42.5 419v2M43.5 176v2M43.5 421v2M44.5 173v3M44.5 423v3M45.5 171v2M45.5 426v2M46.5 170v1M46.5 428v1M47.5 168v2M47.5 429v2M48.5 166v2M48.5 431v2M49.5 164v2M49.5 433v2M50.5 162v2M50.5 435v2M51.5 160v2M51.5 437v2M52.5 158v2M52.5 439v2M53.5 157v1M53.5 441v1M54.5 155v2M54.5 442v2M55.5 153v2M55.5 444v2M56.5 152v1M56.5 446v1M57.5 150v2M57.5 447v2M58.5 148v2M58.5 449v2M59.5 147v1M59.5 451v1M60.5 145v2M60.5 452v2M61.5 144v1M61.5 454v1M62.5 142v2M62.5 455v2M63.5 141v1M63.5 457v1M64.5 139v2M64.5 458v2M65.5 138v1M65.5 460v1M66.5 136v2M66.5 461v2M67.5 135v1M67.5 463v1M68.5 134v1M68.5 464v1M69.5 132v2M69.5 465v2M70.5 131v1M70.5 467v1M71.5 130v1M71.5 468v1M72.5 128v2M72.5 469v2M73.5 127v1M73.5 471v1M74.5 126v1M74.5 472v1M75.5 124v2M75.5 473v2M76.5 123v1M76.5 475v1M77.5 122v1M77.5 476v1M78.5 121v1M78.5 477v1M79.5 119v2M79.5 478v2M80.5 118v1M80.5 480v1M81.5 117v1M81.5 481v1M82.5 116v1M82.5 482v1M83.5 115v1M83.5 483v1M84.5 113v2M84.5 484v2M85.5 112v1M85.5 486v1M86.5 111v1M86.5 487v1M87.5 110v1M87.5 488v1M88.5 109v1M88.5 489v1M89.5 108v1M89.5 490v1M90.5 107v1M90.5 491v1M91.5 106v1M91.5 492v1M92.5 105v1M92.5 493v1M93.5 103v2M93.5 494v2M94.5 102v1M94.5 496v1M95.5 101v1M95.5 497v1M96.5 100v1M96.5 498v1M97.5 99v1M97.5 499v1M98.5 98v1M98.5 500v1M99.5 97v1M99.5 501v1M100.5 96v1M100.5 502v1M101.5 95v1M101.5 503v1M102.5 94v1M102.5 504v1M105.5 92v1M105.5 506v1M106.5 91v1M106.5 507v1M107.5 90v1M107.5 508v1M108.5 89v1M108.5 509v1M109.5 88v1M109.5 510v1M110.5 87v1M110.5 511v1M111.5 86v1M111.5 512v1M112.5 85v1M112.5 513v1M115.5 83v1M115.5 515v1M116.5 82v1M116.5 516v1M117.5 81v1M117.5 517v1M118.5 80v1M118.5 518v1M121.5 78v1M121.5 520v1M122.5 77v1M122.5 521v1M123.5 76v1M123.5 522v1M126.5 74v1M126.5 524v1M127.5 73v1M127.5 525v1M130.5 71v1M130.5 527v1M131.5 70v1M131.5 528v1M134.5 68v1M134.5 530v1M135.5 67v1M135.5 531v1M138.5 65v1M138.5 533v1M141.5 63v1M141.5 535v1M144.5 61v1M144.5 537v1M147.5 59v1M147.5 539v1M152.5 56v1M152.5 542v1M157.5 53v1M157.5 545v1M170.5 46v1M170.5 552v1M428.5 46v1M428.5 552v1M441.5 53v1M441.5 545v1M446.5 56v1M446.5 542v1M451.5 59v1M451.5 539v1M454.5 61v1M454.5 537v1M457.5 63v1M457.5 535v1M460.5 65v1M460.5 533v1M463.5 67v1M463.5 531v1M464.5 68v1M464.5 530v1M467.5 70v1M467.5 528v1M468.5 71v1M468.5 527v1M471.5 73v1M471.5 525v1M472.5 74v1M472.5 524v1M475.5 76v1M475.5 522v1M476.5 77v1M476.5 521v1M477.5 78v1M477.5 520v1M480.5 80v1M480.5 518v1M481.5 81v1M481.5 517v1M482.5 82v1M482.5 516v1M483.5 83v1M483.5 515v1M486.5 85v1M486.5 513v1M487.5 86v1M487.5 512v1M488.5 87v1M488.5 511v1M489.5 88v1M489.5 510v1M490.5 89v1M490.5 509v1M491.5 90v1M491.5 508v1M492.5 91v1M492.5 507v1M493.5 92v1M493.5 506v1M496.5 94v1M496.5 504v1M497.5 95v1M497.5 503v1M498.5 96v1M498.5 502v1M499.5 97v1M499.5 501v1M500.5 98v1M500.5 500v1M501.5 99v1M501.5 499v1M502.5 100v1M502.5 498v1M503.5 101v1M503.5 497v1M504.5 102v1M504.5 496v1M505.5 103v2M505.5 494v2M506.5 105v1M506.5 493v1M507.5 106v1M507.5 492v1M508.5 107v1M508.5 491v1M509.5 108v1M509.5 490v1M510.5 109v1M510.5 489v1M511.5 110v1M511.5 488v1M512.5 111v1M512.5 487v1M513.5 112v1M513.5 486v1M514.5 113v2M514.5 484v2M515.5 115v1M515.5 483v1M516.5 116v1M516.5 482v1M517.5 117v1M517.5 481v1M518.5 118v1M518.5 480v1M519.5 119v2M519.5 478v2M520.5 121v1M520.5 477v1M521.5 122v1M521.5 476v1M522.5 123v1M522.5 475v1M523.5 124v2M523.5 473v2M524.5 126v1M524.5 472v1M525.5 127v1M525.5 471v1M526.5 128v2M526.5 469v2M527.5 130v1M527.5 468v1M528.5 131v1M528.5 467v1M529.5 132v2M529.5 465v2M530.5 134v1M530.5 464v1M531.5 135v1M531.5 463v1M532.5 136v2M532.5 461v2M533.5 138v1M533.5 460v1M534.5 139v2M534.5 458v2M535.5 141v1M535.5 457v1M536.5 142v2M536.5 455v2M537.5 144v1M537.5 454v1M538.5 145v2M538.5 452v2M539.5 147v1M539.5 451v1M540.5 148v2M540.5 449v2M541.5 150v2M541.5 447v2M542.5 152v1M542.5 446v1M543.5 153v2M543.5 444v2M544.5 155v2M544.5 442v2M545.5 157v1M545.5 441v1M546.5 158v2M546.5 439v2M547.5 160v2M547.5 437v2M548.5 162v2M548.5 435v2M549.5 164v2M549.5 433v2M550.5 166v2M550.5 431v2M551.5 168v2M551.5 429v2M552.5 170v1M552.5 428v1M553.5 171v2M553.5 426v2M554.5 173v3M554.5 423v3M555.5 176v2M555.5 421v2M556.5 178v2M556.5 419v2M557.5 180v2M557.5 417v2M558.5 182v2M558.5 415v2M559.5 184v2M559.5 413v2M560.5 186v3M560.5 410v3M561.5 189v2M561.5 408v2M562.5 191v3M562.5 405v3M563.5 194v2M563.5 403v2M564.5 196v3M564.5 400v3M565.5 199v2M565.5 398v2M566.5 201v3M566.5 395v3M567.5 204v3M567.5 392v3M568.5 207v3M568.5 389v3M569.5 210v3M569.5 386v3M570.5 213v3M570.5 383v3M571.5 216v4M571.5 379v4M572.5 220v3M572.5 376v3M573.5 223v4M573.5 372v4M574.5 227v4M574.5 368v4M575.5 231v4M575.5 364v4M576.5 235v4M576.5 360v4M577.5 239v5M577.5 355v5M578.5 244v5M578.5 350v5M579.5 249v6M579.5 344v6M580.5 255v7M580.5 337v7M581.5 262v8M581.5 329v8M582.5 270v13M582.5 316v13M583.5 283v33"/>
<path class="ring" stroke="#fff" d="M284 60.5h31M273 61.5h11M315 61.5h11M265 62.5h8M326 62.5h8M259 63.5h6M334 63.5h6M253 64.5h6M340 64.5h6M249 65.5h4M346 65.5h4M244 66.5h5M350 66.5h5M240 67.5h4M355 67.5h4M236 68.5h4M359 68.5h4M233 69.5h3M363 69.5h3M229 70.5h4M366 70.5h4M226 71.5h3M370 71.5h3M223 72.5h3M373 72.5h3M220 73.5h3M376 73.5h3M218 74.5h2M379 74.5h2M215 75.5h3M381 75.5h3M212 76.5h3M384 76.5h3M210 77.5h2M387 77.5h2M207 78.5h3M389 78.5h3M205 79.5h2M392 79.5h2M203 80.5h2M394 80.5h2M200 81.5h3M396 81.5h3M198 82.5h2M399 82.5h2M196 83.5h2M401 83.5h2M194 84.5h2M403 84.5h2M192 85.5h2M405 85.5h2M190 86.5h2M407 86.5h2M188 87.5h2M409 87.5h2M186 88.5h2M411 88.5h2M184 89.5h2M413 89.5h2M181 91.5h2M416 91.5h2M179 92.5h2M418 92.5h2M177 93.5h2M420 93.5h2M174 95.5h2M423 95.5h2M171 97.5h2M426 97.5h2M169 98.5h2M428 98.5h2M166 100.5h2M431 100.5h2M163 102.5h2M434 102.5h2M159 105.5h2M438 105.5h2M155 108.5h2M442 108.5h2M151 111.5h2M446 111.5h2M146 115.5h2M451 115.5h2M139 121.5h2M458 121.5h2M139 477.5h2M458 477.5h2M146 483.5h2M451 483.5h2M151 487.5h2M446 487.5h2M155 490.5h2M442 490.5h2M159 493.5h2M438 493.5h2M163 496.5h2M434 496.5h2M166 498.5h2M431 498.5h2M169 500.5h2M428 500.5h2M171 501.5h2M426 501.5h2M174 503.5h2M423 503.5h2M177 505.5h2M420 505.5h2M179 506.5h2M418 506.5h2M181 507.5h2M416 507.5h2M184 509.5h2M413 509.5h2M186 510.5h2M411 510.5h2M188 511.5h2M409 511.5h2M190 512.5h2M407 512.5h2M192 513.5h2M405 513.5h2M194 514.5h2M403 514.5h2M196 515.5h2M401 515.5h2M198 516.5h2M399 516.5h2M200 517.5h3M396 517.5h3M203 518.5h2M394 518.5h2M205 519.5h2M392 519.5h2M207 520.5h3M389 520.5h3M210 521.5h2M387 521.5h2M212 522.5h3M384 522.5h3M215 523.5h3M381 523.5h3M218 524.5h2M379 524.5h2M220 525.5h3M376 525.5h3M223 526.5h3M373 526.5h3M226 527.5h3M370 527.5h3M229 528.5h4M366 528.5h4M233 529.5h3M363 529.5h3M236 530.5h4M359 530.5h4M240 531.5h4M355 531.5h4M244 532.5h5M350 532.5h5M249 533.5h4M346 533.5h4M253 534.5h6M340 534.5h6M259 535.5h6M334 535.5h6M265 536.5h8M326 536.5h8M273 537.5h11M315 537.5h11M284 538.5h31M60.5 284v31M61.5 273v11M61.5 315v11M62.5 265v8M62.5 326v8M63.5 259v6M63.5 334v6M64.5 253v6M64.5 340v6M65.5 249v4M65.5 346v4M66.5 244v5M66.5 350v5M67.5 240v4M67.5 355v4M68.5 236v4M68.5 359v4M69.5 233v3M69.5 363v3M70.5 229v4M70.5 366v4M71.5 226v3M71.5 370v3M72.5 223v3M72.5 373v3M73.5 220v3M73.5 376v3M74.5 218v2M74.5 379v2M75.5 215v3M75.5 381v3M76.5 212v3M76.5 384v3M77.5 210v2M77.5 387v2M78.5 207v3M78.5 389v3M79.5 205v2M79.5 392v2M80.5 203v2M80.5 394v2M81.5 200v3M81.5 396v3M82.5 198v2M82.5 399v2M83.5 196v2M83.5 401v2M84.5 194v2M84.5 403v2M85.5 192v2M85.5 405v2M86.5 190v2M86.5 407v2M87.5 188v2M87.5 409v2M88.5 186v2M88.5 411v2M89.5 184v2M89.5 413v2M90.5 183v1M90.5 415v1M91.5 181v2M91.5 416v2M92.5 179v2M92.5 418v2M93.5 177v2M93.5 420v2M94.5 176v1M94.5 422v1M95.5 174v2M95.5 423v2M96.5 173v1M96.5 425v1M97.5 171v2M97.5 426v2M98.5 169v2M98.5 428v2M99.5 168v1M99.5 430v1M100.5 166v2M100.5 431v2M101.5 165v1M101.5 433v1M102.5 163v2M102.5 434v2M103.5 162v1M103.5 436v1M104.5 161v1M104.5 437v1M105.5 159v2M105.5 438v2M106.5 158v1M106.5 440v1M107.5 157v1M107.5 441v1M108.5 155v2M108.5 442v2M109.5 154v1M109.5 444v1M110.5 153v1M110.5 445v1M111.5 151v2M111.5 446v2M112.5 150v1M112.5 448v1M113.5 149v1M113.5 449v1M114.5 148v1M114.5 450v1M115.5 146v2M115.5 451v2M116.5 145v1M116.5 453v1M117.5 144v1M117.5 454v1M118.5 143v1M118.5 455v1M119.5 142v1M119.5 456v1M120.5 141v1M120.5 457v1M121.5 139v2M121.5 458v2M122.5 138v1M122.5 460v1M123.5 137v1M123.5 461v1M124.5 136v1M124.5 462v1M125.5 135v1M125.5 463v1M126.5 134v1M126.5 464v1M127.5 133v1M127.5 465v1M128.5 132v1M128.5 466v1M129.5 131v1M129.5 467v1M130.5 130v1M130.5 468v1M131.5 129v1M131.5 469v1M132.5 128v1M132.5 470v1M133.5 127v1M133.5 471v1M134.5 126v1M134.5 472v1M135.5 125v1M135.5 473v1M136.5 124v1M136.5 474v1M137.5 123v1M137.5 475v1M138.5 122v1M138.5 476v1M141.5 120v1M141.5 478v1M142.5 119v1M142.5 479v1M143.5 118v1M143.5 480v1M144.5 117v1M144.5 481v1M145.5 116v1M145.5 482v1M148.5 114v1M148.5 484v1M149.5 113v1M149.5 485v1M150.5 112v1M150.5 486v1M153.5 110v1M153.5 488v1M154.5 109v1M154.5 489v1M157.5 107v1M157.5 491v1M158.5 106v1M158.5 492v1M161.5 104v1M161.5 494v1M162.5 103v1M162.5 495v1M165.5 101v1M165.5 497v1M168.5 99v1M168.5 499v1M173.5 96v1M173.5 502v1M176.5 94v1M176.5 504v1M183.5 90v1M183.5 508v1M415.5 90v1M415.5 508v1M422.5 94v1M422.5 504v1M425.5 96v1M425.5 502v1M430.5 99v1M430.5 499v1M433.5 101v1M433.5 497v1M436.5 103v1M436.5 495v1M437.5 104v1M437.5 494v1M440.5 106v1M440.5 492v1M441.5 107v1M441.5 491v1M444.5 109v1M444.5 489v1M445.5 110v1M445.5 488v1M448.5 112v1M448.5 486v1M449.5 113v1M449.5 485v1M450.5 114v1M450.5 484v1M453.5 116v1M453.5 482v1M454.5 117v1M454.5 481v1M455.5 118v1M455.5 480v1M456.5 119v1M456.5 479v1M457.5 120v1M457.5 478v1M460.5 122v1M460.5 476v1M461.5 123v1M461.5 475v1M462.5 124v1M462.5 474v1M463.5 125v1M463.5 473v1M464.5 126v1M464.5 472v1M465.5 127v1M465.5 471v1M466.5 128v1M466.5 470v1M467.5 129v1M467.5 469v1M468.5 130v1M468.5 468v1M469.5 131v1M469.5 467v1M470.5 132v1M470.5 466v1M471.5 133v1M471.5 465v1M472.5 134v1M472.5 464v1M473.5 135v1M473.5 463v1M474.5 136v1M474.5 462v1M475.5 137v1M475.5 461v1M476.5 138v1M476.5 460v1M477.5 139v2M477.5 458v2M478.5 141v1M478.5 457v1M479.5 142v1M479.5 456v1M480.5 143v1M480.5 455v1M481.5 144v1M481.5 454v1M482.5 145v1M482.5 453v1M483.5 146v2M483.5 451v2M484.5 148v1M484.5 450v1M485.5 149v1M485.5 449v1M486.5 150v1M486.5 448v1M487.5 151v2M487.5 446v2M488.5 153v1M488.5 445v1M489.5 154v1M489.5 444v1M490.5 155v2M490.5 442v2M491.5 157v1M491.5 441v1M492.5 158v1M492.5 440v1M493.5 159v2M493.5 438v2M494.5 161v1M494.5 437v1M495.5 162v1M495.5 436v1M496.5 163v2M496.5 434v2M497.5 165v1M497.5 433v1M498.5 166v2M498.5 431v2M499.5 168v1M499.5 430v1M500.5 169v2M500.5 428v2M501.5 171v2M501.5 426v2M502.5 173v1M502.5 425v1M503.5 174v2M503.5 423v2M504.5 176v1M504.5 422v1M505.5 177v2M505.5 420v2M506.5 179v2M506.5 418v2M507.5 181v2M507.5 416v2M508.5 183v1M508.5 415v1M509.5 184v2M509.5 413v2M510.5 186v2M510.5 411v2M511.5 188v2M511.5 409v2M512.5 190v2M512.5 407v2M513.5 192v2M513.5 405v2M514.5 194v2M514.5 403v2M515.5 196v2M515.5 401v2M516.5 198v2M516.5 399v2M517.5 200v3M517.5 396v3M518.5 203v2M518.5 394v2M519.5 205v2M519.5 392v2M520.5 207v3M520.5 389v3M521.5 210v2M521.5 387v2M522.5 212v3M522.5 384v3M523.5 215v3M523.5 381v3M524.5 218v2M524.5 379v2M525.5 220v3M525.5 376v3M526.5 223v3M526.5 373v3M527.5 226v3M527.5 370v3M528.5 229v4M528.5 366v4M529.5 233v3M529.5 363v3M530.5 236v4M530.5 359v4M531.5 240v4M531.5 355v4M532.5 244v5M532.5 350v5M533.5 249v4M533.5 346v4M534.5 253v6M534.5 340v6M535.5 259v6M535.5 334v6M536.5 265v8M536.5 326v8M537.5 273v11M537.5 315v11M538.5 284v31"/>
<path class="ring" stroke="#fff" d="M285 75.5h29M274 76.5h11M314 76.5h11M266 77.5h8M325 77.5h8M260 78.5h6M333 78.5h6M255 79.5h5M339 79.5h5M250 80.5h5M344 80.5h5M246 81.5h4M349 81.5h4M242 82.5h4M353 82.5h4M238 83.5h4M357 83.5h4M235 84.5h3M361 84.5h3M232 85.5h3M364 85.5h3M229 86.5h3M367 86.5h3M226 87.5h3M370 87.5h3M223 88.5h3M373 88.5h3M220 89.5h3M376 89.5h3M218 90.5h2M379 90.5h2M215 91.5h3M381 91.5h3M213 92.5h2M384 92.5h2M210 93.5h3M386 93.5h3M208 94.5h2M389 94.5h2M206 95.5h2M391 95.5h2M204 96.5h2M393 96.5h2M202 97.5h2M395 97.5h2M200 98.5h2M397 98.5h2M198 99.5h2M399 99.5h2M196 100.5h2M401 100.5h2M194 101.5h2M403 101.5h2M192 102.5h2M405 102.5h2M190 103.5h2M407 103.5h2M188 104.5h2M409 104.5h2M185 106.5h2M412 106.5h2M183 107.5h2M414 107.5h2M180 109.5h2M417 109.5h2M178 110.5h2M419 110.5h2M175 112.5h2M422 112.5h2M172 114.5h2M425 114.5h2M168 117.5h2M429 117.5h2M164 120.5h2M433 120.5h2M160 123.5h2M437 123.5h2M155 127.5h2M442 127.5h2M147 134.5h2M450 134.5h2M147 464.5h2M450 464.5h2M155 471.5h2M442 471.5h2M160 475.5h2M437 475.5h2M164 478.5h2M433 478.5h2M168 481.5h2M429 481.5h2M172 484.5h2M425 484.5h2M175 486.5h2M422 486.5h2M178 488.5h2M419 488.5h2M180 489.5h2M417 489.5h2M183 491.5h2M414 491.5h2M185 492.5h2M412 492.5h2M188 494.5h2M409 494.5h2M190 495.5h2M407 495.5h2M192 496.5h2M405 496.5h2M194 497.5h2M403 497.5h2M196 498.5h2M401 498.5h2M198 499.5h2M399 499.5h2M200 500.5h2M397 500.5h2M202 501.5h2M395 501.5h2M204 502.5h2M393 502.5h2M206 503.5h2M391 503.5h2M208 504.5h2M389 504.5h2M210 505.5h3M386 505.5h3M213 506.5h2M384 506.5h2M215 507.5h3M381 507.5h3M218 508.5h2M379 508.5h2M220 509.5h3M376 509.5h3M223 510.5h3M373 510.5h3M226 511.5h3M370 511.5h3M229 512.5h3M367 512.5h3M232 513.5h3M364 513.5h3M235 514.5h3M361 514.5h3M238 515.5h4M357 515.5h4M242 516.5h4M353 516.5h4M246 517.5h4M349 517.5h4M250 518.5h5M344 518.5h5M255 519.5h5M339 519.5h5M260 520.5h6M333 520.5h6M266 521.5h8M325 521.5h8M274 522.5h11M314 522.5h11M285 523.5h29M75.5 285v29M76.5 274v11M76.5 314v11M77.5 266v8M77.5 325v8M78.5 260v6M78.5 333v6M79.5 255v5M79.5 339v5M80.5 250v5M80.5 344v5M81.5 246v4M81.5 349v4M82.5 242v4M82.5 353v4M83.5 238v4M83.5 357v4M84.5 235v3M84.5 361v3M85.5 232v3M85.5 364v3M86.5 229v3M86.5 367v3M87.5 226v3M87.5 370v3M88.5 223v3M88.5 373v3M89.5 220v3M89.5 376v3M90.5 218v2M90.5 379v2M91.5 215v3M91.5 381v3M92.5 213v2M92.5 384v2M93.5 210v3M93.5 386v3M94.5 208v2M94.5 389v2M95.5 206v2M95.5 391v2M96.5 204v2M96.5 393v2M97.5 202v2M97.5 395v2M98.5 200v2M98.5 397v2M99.5 198v2M99.5 399v2M100.5 196v2M100.5 401v2M101.5 194v2M101.5 403v2M102.5 192v2M102.5 405v2M103.5 190v2M103.5 407v2M104.5 188v2M104.5 409v2M105.5 187v1M105.5 411v1M106.5 185v2M106.5 412v2M107.5 183v2M107.5 414v2M108.5 182v1M108.5 416v1M109.5 180v2M109.5 417v2M110.5 178v2M110.5 419v2M111.5 177v1M111.5 421v1M112.5 175v2M112.5 422v2M113.5 174v1M113.5 424v1M114.5 172v2M114.5 425v2M115.5 171v1M115.5 427v1M116.5 170v1M116.5 428v1M117.5 168v2M117.5 429v2M118.5 167v1M118.5 431v1M119.5 166v1M119.5 432v1M120.5 164v2M120.5 433v2M121.5 163v1M121.5 435v1M122.5 162v1M122.5 436v1M123.5 160v2M123.5 437v2M124.5 159v1M124.5 439v1M125.5 158v1M125.5 440v1M126.5 157v1M126.5 441v1M127.5 155v2M127.5 442v2M128.5 154v1M128.5 444v1M129.5 153v1M129.5 445v1M130.5 152v1M130.5 446v1M131.5 151v1M131.5 447v1M132.5 150v1M132.5 448v1M133.5 149v1M133.5 449v1M134.5 147v2M134.5 450v2M135.5 146v1M135.5 452v1M136.5 145v1M136.5 453v1M137.5 144v1M137.5 454v1M138.5 143v1M138.5 455v1M139.5 142v1M139.5 456v1M140.5 141v1M140.5 457v1M141.5 140v1M141.5 458v1M142.5 139v1M142.5 459v1M143.5 138v1M143.5 460v1M144.5 137v1M144.5 461v1M145.5 136v1M145.5 462v1M146.5 135v1M146.5 463v1M149.5 133v1M149.5 465v1M150.5 132v1M150.5 466v1M151.5 131v1M151.5 467v1M152.5 130v1M152.5 468v1M153.5 129v1M153.5 469v1M154.5 128v1M154.5 470v1M157.5 126v1M157.5 472v1M158.5 125v1M158.5 473v1M159.5 124v1M159.5 474v1M162.5 122v1M162.5 476v1M163.5 121v1M163.5 477v1M166.5 119v1M166.5 479v1M167.5 118v1M167.5 480v1M170.5 116v1M170.5 482v1M171.5 115v1M171.5 483v1M174.5 113v1M174.5 485v1M177.5 111v1M177.5 487v1M182.5 108v1M182.5 490v1M187.5 105v1M187.5 493v1M411.5 105v1M411.5 493v1M416.5 108v1M416.5 490v1M421.5 111v1M421.5 487v1M424.5 113v1M424.5 485v1M427.5 115v1M427.5 483v1M428.5 116v1M428.5 482v1M431.5 118v1M431.5 480v1M432.5 119v1M432.5 479v1M435.5 121v1M435.5 477v1M436.5 122v1M436.5 476v1M439.5 124v1M439.5 474v1M440.5 125v1M440.5 473v1M441.5 126v1M441.5 472v1M444.5 128v1M444.5 470v1M445.5 129v1M445.5 469v1M446.5 130v1M446.5 468v1M447.5 131v1M447.5 467v1M448.5 132v1M448.5 466v1M449.5 133v1M449.5 465v1M452.5 135v1M452.5 463v1M453.5 136v1M453.5 462v1M454.5 137v1M454.5 461v1M455.5 138v1M455.5 460v1M456.5 139v1M456.5 459v1M457.5 140v1M457.5 458v1M458.5 141v1M458.5 457v1M459.5 142v1M459.5 456v1M460.5 143v1M460.5 455v1M461.5 144v1M461.5 454v1M462.5 145v1M462.5 453v1M463.5 146v1M463.5 452v1M464.5 147v2M464.5 450v2M465.5 149v1M465.5 449v1M466.5 150v1M466.5 448v1M467.5 151v1M467.5 447v1M468.5 152v1M468.5 446v1M469.5 153v1M469.5 445v1M470.5 154v1M470.5 444v1M471.5 155v2M471.5 442v2M472.5 157v1M472.5 441v1M473.5 158v1M473.5 440v1M474.5 159v1M474.5 439v1M475.5 160v2M475.5 437v2M476.5 162v1M476.5 436v1M477.5 163v1M477.5 435v1M478.5 164v2M478.5 433v2M479.5 166v1M479.5 432v1M480.5 167v1M480.5 431v1M481.5 168v2M481.5 429v2M482.5 170v1M482.5 428v1M483.5 171v1M483.5 427v1M484.5 172v2M484.5 425v2M485.5 174v1M485.5 424v1M486.5 175v2M486.5 422v2M487.5 177v1M487.5 421v1M488.5 178v2M488.5 419v2M489.5 180v2M489.5 417v2M490.5 182v1M490.5 416v1M491.5 183v2M491.5 414v2M492.5 185v2M492.5 412v2M493.5 187v1M493.5 411v1M494.5 188v2M494.5 409v2M495.5 190v2M495.5 407v2M496.5 192v2M496.5 405v2M497.5 194v2M497.5 403v2M498.5 196v2M498.5 401v2M499.5 198v2M499.5 399v2M500.5 200v2M500.5 397v2M501.5 202v2M501.5 395v2M502.5 204v2M502.5 393v2M503.5 206v2M503.5 391v2M504.5 208v2M504.5 389v2M505.5 210v3M505.5 386v3M506.5 213v2M506.5 384v2M507.5 215v3M507.5 381v3M508.5 218v2M508.5 379v2M509.5 220v3M509.5 376v3M510.5 223v3M510.5 373v3M511.5 226v3M511.5 370v3M512.5 229v3M512.5 367v3M513.5 232v3M513.5 364v3M514.5 235v3M514.5 361v3M515.5 238v4M515.5 357v4M516.5 242v4M516.5 353v4M517.5 246v4M517.5 349v4M518.5 250v5M518.5 344v5M519.5 255v5M519.5 339v5M520.5 260v6M520.5 333v6M521.5 266v8M521.5 325v8M522.5 274v11M522.5 314v11M523.5 285v29"/>
<path class="ring" stroke="#fff" d="M286 105.5h27M275 106.5h11M313 106.5h11M268 107.5h7M324 107.5h7M263 108.5h5M331 108.5h5M258 109.5h5M336 109.5h5M254 110.5h4M341 110.5h4M250 111.5h4M345 111.5h4M246 112.5h4M349 112.5h4M243 113.5h3M353 113.5h3M240 114.5h3M356 114.5h3M237 115.5h3M359 115.5h3M234 116.5h3M362 116.5h3M231 117.5h3M365 117.5h3M228 118.5h3M368 118.5h3M226 119.5h2M371 119.5h2M224 120.5h2M373 120.5h2M221 121.5h3M375 121.5h3M219 122.5h2M378 122.5h2M217 123.5h2M380 123.5h2M215 124.5h2M382 124.5h2M213 125.5h2M384 125.5h2M211 126.5h2M386 126.5h2M209 127.5h2M388 127.5h2M207 128.5h2M390 128.5h2M205 129.5h2M392 129.5h2M203 130.5h2M394 130.5h2M200 132.5h2M397 132.5h2M198 133.5h2M399 133.5h2M195 135.5h2M402 135.5h2M192 137.5h2M405 137.5h2M189 139.5h2M408 139.5h2M186 141.5h2M411 141.5h2M182 144.5h2M415 144.5h2M178 147.5h2M419 147.5h2M173 151.5h2M424 151.5h2M173 447.5h2M424 447.5h2M178 451.5h2M419 451.5h2M182 454.5h2M415 454.5h2M186 457.5h2M411 457.5h2M189 459.5h2M408 459.5h2M192 461.5h2M405 461.5h2M195 463.5h2M402 463.5h2M198 465.5h2M399 465.5h2M200 466.5h2M397 466.5h2M203 468.5h2M394 468.5h2M205 469.5h2M392 469.5h2M207 470.5h2M390 470.5h2M209 471.5h2M388 471.5h2M211 472.5h2M386 472.5h2M213 473.5h2M384 473.5h2M215 474.5h2M382 474.5h2M217 475.5h2M380 475.5h2M219 476.5h2M378 476.5h2M221 477.5h3M375 477.5h3M224 478.5h2M373 478.5h2M226 479.5h2M371 479.5h2M228 480.5h3M368 480.5h3M231 481.5h3M365 481.5h3M234 482.5h3M362 482.5h3M237 483.5h3M359 483.5h3M240 484.5h3M356 484.5h3M243 485.5h3M353 485.5h3M246 486.5h4M349 486.5h4M250 487.5h4M345 487.5h4M254 488.5h4M341 488.5h4M258 489.5h5M336 489.5h5M263 490.5h5M331 490.5h5M268 491.5h7M324 491.5h7M275 492.5h11M313 492.5h11M286 493.5h27M105.5 286v27M106.5 275v11M106.5 313v11M107.5 268v7M107.5 324v7M108.5 263v5M108.5 331v5M109.5 258v5M109.5 336v5M110.5 254v4M110.5 341v4M111.5 250v4M111.5 345v4M112.5 246v4M112.5 349v4M113.5 243v3M113.5 353v3M114.5 240v3M114.5 356v3M115.5 237v3M115.5 359v3M116.5 234v3M116.5 362v3M117.5 231v3M117.5 365v3M118.5 228v3M118.5 368v3M119.5 226v2M119.5 371v2M120.5 224v2M120.5 373v2M121.5 221v3M121.5 375v3M122.5 219v2M122.5 378v2M123.5 217v2M123.5 380v2M124.5 215v2M124.5 382v2M125.5 213v2M125.5 384v2M126.5 211v2M126.5 386v2M127.5 209v2M127.5 388v2M128.5 207v2M128.5 390v2M129.5 205v2M129.5 392v2M130.5 203v2M130.5 394v2M131.5 202v1M131.5 396v1M132.5 200v2M132.5 397v2M133.5 198v2M133.5 399v2M134.5 197v1M134.5 401v1M135.5 195v2M135.5 402v2M136.5 194v1M136.5 404v1M137.5 192v2M137.5 405v2M138.5 191v1M138.5 407v1M139.5 189v2M139.5 408v2M140.5 188v1M140.5 410v1M141.5 186v2M141.5 411v2M142.5 185v1M142.5 413v1M143.5 184v1M143.5 414v1M144.5 182v2M144.5 415v2M145.5 181v1M145.5 417v1M146.5 180v1M146.5 418v1M147.5 178v2M147.5 419v2M148.5 177v1M148.5 421v1M149.5 176v1M149.5 422v1M150.5 175v1M150.5 423v1M151.5 173v2M151.5 424v2M152.5 172v1M152.5 426v1M153.5 171v1M153.5 427v1M154.5 170v1M154.5 428v1M155.5 169v1M155.5 429v1M156.5 168v1M156.5 430v1M157.5 167v1M157.5 431v1M158.5 166v1M158.5 432v1M159.5 165v1M159.5 433v1M160.5 164v1M160.5 434v1M161.5 163v1M161.5 435v1M162.5 162v1M162.5 436v1M163.5 161v1M163.5 437v1M164.5 160v1M164.5 438v1M165.5 159v1M165.5 439v1M166.5 158v1M166.5 440v1M167.5 157v1M167.5 441v1M168.5 156v1M168.5 442v1M169.5 155v1M169.5 443v1M170.5 154v1M170.5 444v1M171.5 153v1M171.5 445v1M172.5 152v1M172.5 446v1M175.5 150v1M175.5 448v1M176.5 149v1M176.5 449v1M177.5 148v1M177.5 450v1M180.5 146v1M180.5 452v1M181.5 145v1M181.5 453v1M184.5 143v1M184.5 455v1M185.5 142v1M185.5 456v1M188.5 140v1M188.5 458v1M191.5 138v1M191.5 460v1M194.5 136v1M194.5 462v1M197.5 134v1M197.5 464v1M202.5 131v1M202.5 467v1M396.5 131v1M396.5 467v1M401.5 134v1M401.5 464v1M404.5 136v1M404.5 462v1M407.5 138v1M407.5 460v1M410.5 140v1M410.5 458v1M413.5 142v1M413.5 456v1M414.5 143v1M414.5 455v1M417.5 145v1M417.5 453v1M418.5 146v1M418.5 452v1M421.5 148v1M421.5 450v1M422.5 149v1M422.5 449v1M423.5 150v1M423.5 448v1M426.5 152v1M426.5 446v1M427.5 153v1M427.5 445v1M428.5 154v1M428.5 444v1M429.5 155v1M429.5 443v1M430.5 156v1M430.5 442v1M431.5 157v1M431.5 441v1M432.5 158v1M432.5 440v1M433.5 159v1M433.5 439v1M434.5 160v1M434.5 438v1M435.5 161v1M435.5 437v1M436.5 162v1M436.5 436v1M437.5 163v1M437.5 435v1M438.5 164v1M438.5 434v1M439.5 165v1M439.5 433v1M440.5 166v1M440.5 432v1M441.5 167v1M441.5 431v1M442.5 168v1M442.5 430v1M443.5 169v1M443.5 429v1M444.5 170v1M444.5 428v1M445.5 171v1M445.5 427v1M446.5 172v1M446.5 426v1M447.5 173v2M447.5 424v2M448.5 175v1M448.5 423v1M449.5 176v1M449.5 422v1M450.5 177v1M450.5 421v1M451.5 178v2M451.5 419v2M452.5 180v1M452.5 418v1M453.5 181v1M453.5 417v1M454.5 182v2M454.5 415v2M455.5 184v1M455.5 414v1M456.5 185v1M456.5 413v1M457.5 186v2M457.5 411v2M458.5 188v1M458.5 410v1M459.5 189v2M459.5 408v2M460.5 191v1M460.5 407v1M461.5 192v2M461.5 405v2M462.5 194v1M462.5 404v1M463.5 195v2M463.5 402v2M464.5 197v1M464.5 401v1M465.5 198v2M465.5 399v2M466.5 200v2M466.5 397v2M467.5 202v1M467.5 396v1M468.5 203v2M468.5 394v2M469.5 205v2M469.5 392v2M470.5 207v2M470.5 390v2M471.5 209v2M471.5 388v2M472.5 211v2M472.5 386v2M473.5 213v2M473.5 384v2M474.5 215v2M474.5 382v2M475.5 217v2M475.5 380v2M476.5 219v2M476.5 378v2M477.5 221v3M477.5 375v3M478.5 224v2M478.5 373v2M479.5 226v2M479.5 371v2M480.5 228v3M480.5 368v3M481.5 231v3M481.5 365v3M482.5 234v3M482.5 362v3M483.5 237v3M483.5 359v3M484.5 240v3M484.5 356v3M485.5 243v3M485.5 353v3M486.5 246v4M486.5 349v4M487.5 250v4M487.5 345v4M488.5 254v4M488.5 341v4M489.5 258v5M489.5 336v5M490.5 263v5M490.5 331v5M491.5 268v7M491.5 324v7M492.5 275v11M492.5 313v11M493.5 286v27"/>
<path class="cusps-minor" stroke="#7f7f7f" d="M131.5 203v1M131.5 395v1M133.5 204v1M133.5 394v1M135.5 205v1M135.5 393v1M137.5 206v1M137.5 392v1M139.5 207v1M139.5 391v1M141.5 208v1M141.5 390v1M143.5 209v1M143.5 389v1M145.5 211v1M145.5 387v1M147.5 212v1M147.5 386v1M149.5 213v1M149.5 385v1M151.5 214v1M151.5 384v1M153.5 215v1M153.5 383v1M155.5 216v1M155.5 382v1M157.5 217v1M157.5 381v1M159.5 219v1M159.5 379v1M161.5 220v1M161.5 378v1M163.5 221v1M163.5 377v1M165.5 222v1M165.5 376v1M167.5 223v1M167.5 375v1M169.5 224v1M169.5 374v1M171.5 226v1M171.5 372v1M173.5 227v1M173.5 371v1M175.5 228v1M175.5 370v1M177.5 229v1M177.5 369v1M179.5 230v1M179.5 368v1M181.5 231v1M181.5 367v1M183.5 232v1M183.5 366v1M185.5 234v1M185.5 364v1M187.5 235v1M187.5 363v1M189.5 236v1M189.5 362v1M191.5 237v1M191.5 361v1M193.5 238v1M193.5 360v1M195.5 239v1M195.5 359v1M197.5 240v1M197.5 358v1M199.5 242v1M199.5 356v1M201.5 243v1M201.5 355v1M203.5 131v1M203.5 244v1M203.5 354v1M203.5 467v1M204.5 133v1M204.5 465v1M205.5 135v1M205.5 245v1M205.5 353v1M205.5 463v1M206.5 137v1M206.5 461v1M207.5 139v1M207.5 246v1M207.5 352v1M207.5 459v1M208.5 141v1M208.5 457v1M209.5 143v1M209.5 247v1M209.5 351v1M209.5 455v1M211.5 145v1M211.5 248v1M211.5 350v1M211.5 453v1M212.5 147v1M212.5 451v1M213.5 149v1M213.5 250v1M213.5 348v1M213.5 449v1M214.5 151v1M214.5 447v1M215.5 153v1M215.5 251v1M215.5 347v1M215.5 445v1M216.5 155v1M216.5 443v1M217.5 157v1M217.5 252v1M217.5 346v1M217.5 441v1M219.5 159v1M219.5 253v1M219.5 345v1M219.5 439v1M220.5 161v1M220.5 437v1M221.5 163v1M221.5 254v1M221.5 344v1M221.5 435v1M222.5 165v1M222.5 433v1M223.5 167v1M223.5 255v1M223.5 343v1M223.5 431v1M224.5 169v1M224.5 429v1M225.5 257v1M225.5 341v1M226.5 171v1M226.5 427v1M227.5 173v1M227.5 258v1M227.5 340v1M227.5 425v1M228.5 175v1M228.5 423v1M229.5 177v1M229.5 259v1M229.5 339v1M229.5 421v1M230.5 179v1M230.5 419v1M231.5 181v1M231.5 260v1M231.5 338v1M231.5 417v1M232.5 183v1M232.5 415v1M233.5 261v1M233.5 337v1M234.5 185v1M234.5 413v1M235.5 187v1M235.5 262v1M235.5 336v1M235.5 411v1M236.5 189v1M236.5 409v1M237.5 191v1M237.5 263v1M237.5 335v1M237.5 407v1M238.5 193v1M238.5 405v1M239.5 195v1M239.5 265v1M239.5 333v1M239.5 403v1M240.5 197v1M240.5 401v1M241.5 266v1M241.5 332v1M242.5 199v1M242.5 399v1M243.5 201v1M243.5 267v1M243.5 331v1M243.5 397v1M244.5 203v1M244.5 395v1M245.5 205v1M245.5 268v1M245.5 330v1M245.5 393v1M246.5 207v1M246.5 391v1M247.5 209v1M247.5 269v1M247.5 329v1M247.5 389v1M248.5 211v1M248.5 387v1M249.5 270v1M249.5 328v1M250.5 213v1M250.5 385v1M251.5 215v1M251.5 271v1M251.5 327v1M251.5 383v1M252.5 217v1M252.5 381v1M253.5 219v1M253.5 273v1M253.5 325v1M253.5 379v1M254.5 221v1M254.5 377v1M255.5 223v1M255.5 274v1M255.5 324v1M255.5 375v1M257.5 225v1M257.5 275v1M257.5 323v1M257.5 373v1M258.5 227v1M258.5 371v1M259.5 229v1M259.5 276v1M259.5 322v1M259.5 369v1M260.5 231v1M260.5 367v1M261.5 233v1M261.5 277v1M261.5 321v1M261.5 365v1M262.5 235v1M262.5 363v1M263.5 237v1M263.5 278v1M263.5 320v1M263.5 361v1M265.5 239v1M265.5 279v1M265.5 319v1M265.5 359v1M266.5 241v1M266.5 357v1M267.5 243v1M267.5 281v1M267.5 317v1M267.5 355v1M268.5 245v1M268.5 353v1M269.5 247v1M269.5 282v1M269.5 316v1M269.5 351v1M270.5 249v1M270.5 349v1M271.5 251v1M271.5 283v1M271.5 315v1M271.5 347v1M273.5 253v1M273.5 284v1M273.5 314v1M273.5 345v1M274.5 255v1M274.5 343v1M275.5 257v1M275.5 285v1M275.5 313v1M275.5 341v1M276.5 259v1M276.5 339v1M277.5 261v1M277.5 286v1M277.5 312v1M277.5 337v1M278.5 263v1M278.5 335v1M279.5 265v1M279.5 288v1M279.5 310v1M279.5 333v1M281.5 267v1M281.5 289v1M281.5 309v1M281.5 331v1M282.5 269v1M282.5 329v1M283.5 271v1M283.5 290v1M283.5 308v1M283.5 327v1M284.5 273v1M284.5 325v1M285.5 275v1M285.5 291v1M285.5 307v1M285.5 323v1M286.5 277v1M286.5 321v1M287.5 292v1M287.5 306v1M288.5 279v1M288.5 319v1M289.5 281v1M289.5 293v1M289.5 305v1M289.5 317v1M290.5 283v1M290.5 315v1M291.5 285v1M291.5 294v1M291.5 304v1M291.5 313v1M292.5 287v1M292.5 311v1M293.5 289v1M293.5 296v1M293.5 302v1M293.5 309v1M294.5 291v1M294.5 307v1M295.5 297v1M295.5 301v1M296.5 293v1M296.5 305v1M297.5 295v1M297.5 298v1M297.5 300v1M297.5 303v1M298.5 297v1M298.5 301v1M299.5 299v1M300.5 297v1M300.5 301v1M301.5 295v1M301.5 298v1M301.5 300v1M301.5 303v1M302.5 293v1M302.5 305v1M303.5 297v1M303.5 301v1M304.5 291v1M304.5 307v1M305.5 289v1M305.5 296v1M305.5 302v1M305.5 309v1M306.5 287v1M306.5 311v1M307.5 285v1M307.5 294v1M307.5 304v1M307.5 313v1M308.5 283v1M308.5 315v1M309.5 281v1M309.5 293v1M309.5 305v1M309.5 317v1M310.5 279v1M310.5 319v1M311.5 292v1M311.5 306v1M312.5 277v1M312.5 321v1M313.5 275v1M313.5 291v1M313.5 307v1M313.5 323v1M314.5 273v1M314.5 325v1M315.5 271v1M315.5 290v1M315.5 308v1M315.5 327v1M316.5 269v1M316.5 329v1M317.5 267v1M317.5 289v1M317.5 309v1M317.5 331v1M319.5 265v1M319.5 288v1M319.5 310v1M319.5 333v1M320.5 263v1M320.5 335v1M321.5 261v1M321.5 286v1M321.5 312v1M321.5 337v1M322.5 259v1M322.5 339v1M323.5 257v1M323.5 285v1M323.5 313v1M323.5 341v1M324.5 255v1M324.5 343v1M325.5 253v1M325.5 284v1M325.5 314v1M325.5 345v1M327.5 251v1M327.5 283v1M327.5 315v1M327.5 347v1M328.5 249v1M328.5 349v1M329.5 247v1M329.5 282v1M329.5 316v1M329.5 351v1M330.5 245v1M330.5 353v1M331.5 243v1M331.5 281v1M331.5 317v1M331.5 355v1M332.5 241v1M332.5 357v1M333.5 239v1M333.5 279v1M333.5 319v1M333.5 359v1M335.5 237v1M335.5 278v1M335.5 320v1M335.5 361v1M336.5 235v1M336.5 363v1M337.5 233v1M337.5 277v1M337.5 321v1M337.5 365v1M338.5 231v1M338.5 367v1M339.5 229v1M339.5 276v1M339.5 322v1M339.5 369v1M340.5 227v1M340.5 371v1M341.5 225v1M341.5 275v1M341.5 323v1M341.5 373v1M343.5 223v1M343.5 274v1M343.5 324v1M343.5 375v1M344.5 221v1M344.5 377v1M345.5 219v1M345.5 273v1M345.5 325v1M345.5 379v1M346.5 217v1M346.5 381v1M347.5 215v1M347.5 271v1M347.5 327v1M347.5 383v1M348.5 213v1M348.5 385v1M349.5 270v1M349.5 328v1M350.5 211v1M350.5 387v1M351.5 209v1M351.5 269v1M351.5 329v1M351.5 389v1M352.5 207v1M352.5 391v1M353.5 205v1M353.5 268v1M353.5 330v1M353.5 393v1M354.5 203v1M354.5 395v1M355.5 201v1M355.5 267v1M355.5 331v1M355.5 397v1M356.5 199v1M356.5 399v1M357.5 266v1M357.5 332v1M358.5 197v1M358.5 401v1M359.5 195v1M359.5 265v1M359.5 333v1M359.5 403v1M360.5 193v1M360.5 405v1M361.5 191v1M361.5 263v1M361.5 335v1M361.5 407v1M362.5 189v1M362.5 409v1M363.5 187v1M363.5 262v1M363.5 336v1M363.5 411v1M364.5 185v1M364.5 413v1M365.5 261v1M365.5 337v1M366.5 183v1M366.5 415v1M367.5 181v1M367.5 260v1M367.5 338v1M367.5 417v1M368.5 179v1M368.5 419v1M369.5 177v1M369.5 259v1M369.5 339v1M369.5 421v1M370.5 175v1M370.5 423v1M371.5 173v1M371.5 258v1M371.5 340v1M371.5 425v1M372.5 171v1M372.5 427v1M373.5 257v1M373.5 341v1M374.5 169v1M374.5 429v1M375.5 167v1M375.5 255v1M375.5 343v1M375.5 431v1M376.5 165v1M376.5 433v1M377.5 163v1M377.5 254v1M377.5 344v1M377.5 435v1M378.5 161v1M378.5 437v1M379.5 159v1M379.5 253v1M379.5 345v1M379.5 439v1M381.5 157v1M381.5 252v1M381.5 346v1M381.5 441v1M382.5 155v1M382.5 443v1M383.5 153v1M383.5 251v1M383.5 347v1M383.5 445v1M384.5 151v1M384.5 447v1M385.5 149v1M385.5 250v1M385.5 348v1M385.5 449v1M386.5 147v1M386.5 451v1M387.5 145v1M387.5 248v1M387.5 350v1M387.5 453v1M389.5 143v1M389.5 247v1M389.5 351v1M389.5 455v1M390.5 141v1M390.5 457v1M391.5 139v1M391.5 246v1M391.5 352v1M391.5 459v1M392.5 137v1M392.5 461v1M393.5 135v1M393.5 245v1M393.5 353v1M393.5 463v1M394.5 133v1M394.5 465v1M395.5 131v1M395.5 244v1M395.5 354v1M395.5 467v1M397.5 243v1M397.5 355v1M399.5 242v1M399.5 356v1M401.5 240v1M401.5 358v1M403.5 239v1M403.5 359v1M405.5 238v1M405.5 360v1M407.5 237v1M407.5 361v1M409.5 236v1M409.5 362v1M411.5 235v1M411.5 363v1M413.5 234v1M413.5 364v1M415.5 232v1M415.5 366v1M417.5 231v1M417.5 367v1M419.5 230v1M419.5 368v1M421.5 229v1M421.5 369v1M423.5 228v1M423.5 370v1M425.5 227v1M425.5 371v1M427.5 226v1M427.5 372v1M429.5 224v1M429.5 374v1M431.5 223v1M431.5 375v1M433.5 222v1M433.5 376v1M435.5 221v1M435.5 377v1M437.5 220v1M437.5 378v1M439.5 219v1M439.5 379v1M441.5 217v1M441.5 381v1M443.5 216v1M443.5 382v1M445.5 215v1M445.5 383v1M447.5 214v1M447.5 384v1M449.5 213v1M449.5 385v1M451.5 212v1M451.5 386v1M453.5 211v1M453.5 387v1M455.5 209v1M455.5 389v1M457.5 208v1M457.5 390v1M459.5 207v1M459.5 391v1M461.5 206v1M461.5 392v1M463.5 205v1M463.5 393v1M465.5 204v1M465.5 394v1M467.5 203v1M467.5 395v1"/>
<path class="cusps" stroke="#fff" d="M53 158.5h2M544 158.5h2M55 159.5h2M542 159.5h2M57 160.5h2M540 160.5h2M60 162.5h2M537 162.5h2M62 163.5h2M535 163.5h2M64 164.5h2M533 164.5h2M66 165.5h2M531 165.5h2M69 167.5h2M528 167.5h2M71 168.5h2M526 168.5h2M73 169.5h2M524 169.5h2M76 171.5h2M521 171.5h2M78 172.5h2M519 172.5h2M80 173.5h2M517 173.5h2M82 174.5h2M515 174.5h2M85 176.5h2M512 176.5h2M87 177.5h2M510 177.5h2M89 178.5h2M508 178.5h2M105 188.5h2M492 188.5h2M107 189.5h2M490 189.5h2M109 190.5h2M488 190.5h2M112 192.5h2M485 192.5h2M114 193.5h2M483 193.5h2M481 194.5h2M117 195.5h2M119 196.5h2M478 196.5h2M121 197.5h2M476 197.5h2M124 199.5h2M473 199.5h2M126 200.5h2M471 200.5h2M128 201.5h2M469 201.5h2M14 299.5h46M74 299.5h31M494 299.5h31M539 299.5h46M128 397.5h2M469 397.5h2M126 398.5h2M471 398.5h2M124 399.5h2M473 399.5h2M121 401.5h2M476 401.5h2M119 402.5h2M478 402.5h2M117 403.5h2M481 404.5h2M114 405.5h2M483 405.5h2M112 406.5h2M485 406.5h2M109 408.5h2M488 408.5h2M107 409.5h2M490 409.5h2M105 410.5h2M492 410.5h2M89 420.5h2M508 420.5h2M87 421.5h2M510 421.5h2M85 422.5h2M512 422.5h2M82 424.5h2M515 424.5h2M80 425.5h2M517 425.5h2M78 426.5h2M519 426.5h2M76 427.5h2M521 427.5h2M73 429.5h2M524 429.5h2M71 430.5h2M526 430.5h2M69 431.5h2M528 431.5h2M66 433.5h2M531 433.5h2M64 434.5h2M533 434.5h2M62 435.5h2M535 435.5h2M60 436.5h2M537 436.5h2M57 438.5h2M540 438.5h2M55 439.5h2M542 439.5h2M53 440.5h2M544 440.5h2M52.5 157v1M52.5 441v1M59.5 161v1M59.5 437v1M68.5 166v1M68.5 432v1M75.5 170v1M75.5 428v1M84.5 175v1M84.5 423v1M91.5 179v1M91.5 419v1M104.5 187v1M104.5 411v1M111.5 191v1M111.5 407v1M116.5 194v1M116.5 404v1M123.5 198v1M123.5 400v1M130.5 202v1M130.5 396v1M157.5 52v1M157.5 546v1M158.5 53v2M158.5 544v2M159.5 55v2M159.5 542v2M160.5 57v2M160.5 540v2M161.5 59v1M161.5 539v1M162.5 60v2M162.5 537v2M163.5 62v2M163.5 535v2M164.5 64v2M164.5 533v2M165.5 66v2M165.5 531v2M166.5 68v1M166.5 530v1M167.5 69v2M167.5 528v2M168.5 71v2M168.5 526v2M169.5 73v2M169.5 524v2M170.5 75v1M170.5 523v1M171.5 76v2M171.5 521v2M172.5 78v2M172.5 519v2M173.5 80v2M173.5 517v2M174.5 82v2M174.5 515v2M175.5 84v1M175.5 514v1M176.5 85v2M176.5 512v2M177.5 87v2M177.5 510v2M178.5 89v2M178.5 508v2M179.5 91v1M179.5 507v1M187.5 104v1M187.5 494v1M188.5 105v2M188.5 492v2M189.5 107v2M189.5 490v2M190.5 109v2M190.5 488v2M191.5 111v1M191.5 487v1M192.5 112v2M192.5 485v2M193.5 114v2M193.5 483v2M194.5 116v1M194.5 481v2M195.5 117v2M195.5 480v1M196.5 119v2M196.5 478v2M197.5 121v2M197.5 476v2M198.5 123v1M198.5 475v1M199.5 124v2M199.5 473v2M200.5 126v2M200.5 471v2M201.5 128v2M201.5 469v2M202.5 130v1M202.5 468v1M299.5 14v46M299.5 74v31M299.5 494v31M299.5 539v46M396.5 130v1M396.5 468v1M397.5 128v2M397.5 469v2M398.5 126v2M398.5 471v2M399.5 124v2M399.5 473v2M400.5 123v1M400.5 475v1M401.5 121v2M401.5 476v2M402.5 119v2M402.5 478v2M403.5 117v2M403.5 480v1M404.5 116v1M404.5 481v2M405.5 114v2M405.5 483v2M406.5 112v2M406.5 485v2M407.5 111v1M407.5 487v1M408.5 109v2M408.5 488v2M409.5 107v2M409.5 490v2M410.5 105v2M410.5 492v2M411.5 104v1M411.5 494v1M419.5 91v1M419.5 507v1M420.5 89v2M420.5 508v2M421.5 87v2M421.5 510v2M422.5 85v2M422.5 512v2M423.5 84v1M423.5 514v1M424.5 82v2M424.5 515v2M425.5 80v2M425.5 517v2M426.5 78v2M426.5 519v2M427.5 76v2M427.5 521v2M428.5 75v1M428.5 523v1M429.5 73v2M429.5 524v2M430.5 71v2M430.5 526v2M431.5 69v2M431.5 528v2M432.5 68v1M432.5 530v1M433.5 66v2M433.5 531v2M434.5 64v2M434.5 533v2M435.5 62v2M435.5 535v2M436.5 60v2M436.5 537v2M437.5 59v1M437.5 539v1M438.5 57v2M438.5 540v2M439.5 55v2M439.5 542v2M440.5 53v2M440.5 544v2M441.5 52v1M441.5 546v1M468.5 202v1M468.5 396v1M475.5 198v1M475.5 400v1M480.5 195v1M480.5 403v1M487.5 191v1M487.5 407v1M494.5 187v1M494.5 411v1M507.5 179v1M507.5 419v1M514.5 175v1M514.5 423v1M523.5 170v1M523.5 428v1M530.5 166v1M530.5 432v1M539.5 161v1M539.5 437v1M546.5 157v1M546.5 441v1"/>
<path class="sign" stroke="#f00" d="M478 106.5h3M488 106.5h3M476.5 108v3M477.5 107v1M477.5 111v1M478.5 112v1M481.5 107v1M482.5 108v3M483.5 111v4M484.5 115v8M485.5 111v4M486.5 108v3M487.5 107v1M490.5 112v1M491.5 107v1M491.5 111v1M492.5 108v3"/>
<path class="sign" stroke="#ff0" d="M363 41.5h2M370 41.5h2M365 42.5h5M363 43.5h2M370 43.5h2M363 53.5h2M370 53.5h2M365 54.5h5M361.5 38v1M361.5 46v5M362.5 39v2M362.5 44v2M362.5 51v2M372.5 39v2M372.5 44v2M372.5 51v2M373.5 38v1M373.5 46v5"/>
<path class="sign" stroke="#0f0" d="M227 40.5h11M227 52.5h11M225.5 38v1M225.5 54v1M226.5 39v1M226.5 53v1M229.5 41v11M235.5 41v11M238.5 39v1M238.5 53v1M239.5 38v1M239.5 54v1"/>
<path class="sign" stroke="#00f" d="M112 107.5h5M109 108.5h3M118 109.5h3M108 113.5h3M118 115.5h3M108 119.5h3M117 120.5h3M112 121.5h5M106.5 111v1M106.5 115v3M107.5 110v1M107.5 114v1M107.5 118v1M108.5 109v1M111.5 114v1M111.5 118v1M111.5 120v1M112.5 115v3M116.5 111v3M117.5 108v1M117.5 110v1M117.5 114v1M120.5 119v1M121.5 110v1M121.5 114v1M121.5 118v1M122.5 111v3M122.5 117v1"/>
<path class="sign" stroke="#f00" d="M44 223.5h5M38.5 235v1M39.5 236v1M40.5 227v5M40.5 237v1M41.5 226v1M41.5 232v1M41.5 236v1M42.5 225v1M42.5 233v3M43.5 224v1M49.5 224v1M50.5 225v1M50.5 233v3M51.5 226v1M51.5 232v1M51.5 236v1M52.5 227v5M52.5 237v1M53.5 238v1M54.5 239v1"/>
<path class="sign" stroke="#ff0" d="M51 362.5h2M48 364.5h2M38.5 359v1M39.5 360v1M40.5 361v13M41.5 360v1M42.5 359v1M43.5 360v1M44.5 361v13M45.5 360v1M46.5 359v1M47.5 360v1M48.5 361v3M48.5 365v7M48.5 375v1M49.5 372v1M49.5 374v1M50.5 363v1M50.5 373v1M51.5 372v1M51.5 374v1M52.5 361v1M52.5 363v9M52.5 375v1"/>
<path class="sign" stroke="#0f0" d="M112 480.5h5M106 486.5h7M116 486.5h7M106 490.5h17M110.5 482v3M111.5 481v1M111.5 485v1M117.5 481v1M117.5 485v1M118.5 482v3"/>
<path class="sign" stroke="#00f" d="M237 556.5h3M235 560.5h2M223.5 544v1M224.5 545v1M225.5 546v13M226.5 545v1M227.5 544v1M228.5 545v1M229.5 546v13M230.5 545v1M231.5 544v1M232.5 545v1M233.5 546v13M234.5 559v1M237.5 559v1M238.5 555v1M238.5 557v2"/>
<path class="sign" stroke="#f00" d="M371 544.5h5M374 545.5h2M359.5 560v1M360.5 559v1M361.5 550v1M361.5 558v1M362.5 551v1M362.5 557v1M363.5 552v1M363.5 556v1M364.5 553v1M364.5 555v1M365.5 554v1M366.5 553v1M366.5 555v1M367.5 552v1M367.5 556v1M368.5 551v1M368.5 557v1M369.5 550v1M369.5 558v1M370.5 549v1M371.5 548v1M372.5 547v1M373.5 546v1M375.5 546v3"/>
<path class="sign" stroke="#ff0" d="M488 476.5h3M477 477.5h2M484 477.5h2M488 482.5h3M476.5 478v1M478.5 476v1M478.5 478v7M479.5 485v1M480.5 486v5M481.5 485v1M482.5 480v5M483.5 479v1M484.5 476v1M484.5 478v1M485.5 479v1M486.5 478v1M486.5 480v1M487.5 477v1M487.5 481v1M489.5 483v1M490.5 484v1M490.5 492v1M491.5 477v1M491.5 481v1M491.5 485v1M491.5 491v1M492.5 478v3M492.5 486v5"/>
<path class="sign" stroke="#0f0" d="M547 360.5h2M553 360.5h2M550 364.5h2M556 364.5h2M547 370.5h2M553 370.5h2M550 374.5h2M556 374.5h2M544.5 365v1M544.5 375v1M545.5 363v2M545.5 373v2M546.5 362v1M546.5 372v1M547.5 361v1M547.5 371v1M548.5 359v1M548.5 369v1M549.5 361v3M549.5 371v3M550.5 365v1M550.5 375v1M551.5 363v1M551.5 373v1M552.5 362v1M552.5 372v1M553.5 361v1M553.5 371v1M554.5 359v1M554.5 369v1M555.5 361v3M555.5 371v3M556.5 365v1M556.5 375v1M557.5 363v1M557.5 373v1M558.5 362v1M558.5 372v1M559.5 360v2M559.5 370v2M560.5 359v1M560.5 369v1"/>
<path class="sign" stroke="#00f" d="M544 231.5h17M544.5 223v1M544.5 239v1M545.5 224v1M545.5 238v1M546.5 225v1M546.5 237v1M547.5 226v1M547.5 235v2M548.5 227v4M548.5 232v3M556.5 227v4M556.5 232v3M557.5 226v1M557.5 235v2M558.5 225v1M558.5 237v1M559.5 224v1M559.5 238v1M560.5 223v1M560.5 239v1"/>
<path class="tick-MC" stroke="#fff" d="M255.5 137v14"/>
<path class="tick-Asc" stroke="#fff" d="M148 343.5h3M144 344.5h4M140 345.5h4M138 346.5h2"/>
<path class="tick-Node" stroke="#7f7f7f" d="M171 407.5h17"/>
<path class="glyph-Node" stroke="#007f7f" d="M160 407.5h5M156 419.5h3M166 419.5h3M154.5 421v1M155.5 420v1M155.5 422v1M156.5 411v5M156.5 423v1M157.5 410v1M157.5 416v1M157.5 422v1M158.5 409v1M158.5 417v2M158.5 420v2M159.5 408v1M165.5 408v1M166.5 409v1M166.5 417v2M166.5 420v2M167.5 410v1M167.5 416v1M167.5 422v1M168.5 411v5M168.5 423v1M169.5 420v1M169.5 422v1M170.5 421v1"/>
<path class="tick-Plut" stroke="#fff" d="M184.5 419v2M185.5 417v2M186.5 415v2M187.5 413v2M188.5 411v2M189.5 409v2"/>
<path class="glyph-Plut" stroke="#00f" d="M174 421.5h3M174 425.5h3M171 428.5h2M178 428.5h2M173 429.5h5M171 433.5h9M169.5 421v5M170.5 426v2M173.5 422v3M175.5 430v3M175.5 434v4M177.5 422v3M180.5 426v2M181.5 421v5"/>
<path class="tick-Nept" stroke="#fff" d="M338.5 450v2M339.5 452v4M340.5 456v4M341.5 460v2"/>
<path class="glyph-Nept" stroke="#00f" d="M337 467.5h3M342 467.5h5M349 467.5h3M340 472.5h2M347 472.5h2M342 473.5h5M340 477.5h9M338.5 465v2M338.5 468v2M339.5 470v2M344.5 465v2M344.5 468v5M344.5 474v3M344.5 478v4M349.5 470v2M350.5 465v2M350.5 468v2"/>
<path class="tick-Uran" stroke="#fff" d="M246.5 457v2M247.5 455v2M248.5 453v2M249.5 451v2M250.5 449v2M251.5 447v2"/>
<path class="glyph-Uran" stroke="#0f0" d="M238 467.5h9M241 473.5h3M241 477.5h3M236.5 461v1M236.5 471v1M237.5 462v1M237.5 470v1M238.5 463v4M238.5 468v2M240.5 474v3M242.5 465v2M242.5 468v5M244.5 474v3M246.5 463v4M246.5 468v2M247.5 462v1M247.5 470v1M248.5 461v1M248.5 471v1"/>
<path class="tick-Satu" stroke="#fff" d="M131 297.5h13"/>
<path class="glyph-Satu" stroke="#ff0" d="M113 290.5h9M121 294.5h3M117 296.5h3M117.5 288v2M117.5 291v5M117.5 297v6M120.5 295v1M123.5 300v3M124.5 295v1M124.5 299v1M124.5 303v1M125.5 296v3M125.5 304v1"/>
<path class="tick-Jupi" stroke="#7f7f7f" d="M200.5 164v1M201.5 165v1M202.5 166v1M203.5 167v1M204.5 168v2M205.5 170v1M206.5 171v1M207.5 172v1M208.5 173v1"/>
<path class="glyph-Jupi" stroke="#f00" d="M188 148.5h2M187 160.5h15M187.5 159v1M188.5 157v2M189.5 155v2M190.5 149v1M190.5 153v2M191.5 150v3M197.5 148v12M197.5 161v2M198.5 147v1M199.5 146v1"/>
<path class="tick-Mars" stroke="#fff" d="M151 220.5h2M153 221.5h2M155 222.5h2M157 223.5h2M159 224.5h2M161 225.5h2"/>
<path class="glyph-Mars" stroke="#f00" d="M144 206.5h6M148 207.5h2M136 212.5h5M141 213.5h2M136 222.5h5M133.5 215v5M134.5 214v1M134.5 220v1M135.5 213v1M135.5 221v1M141.5 221v1M142.5 214v1M142.5 220v1M143.5 212v1M143.5 215v5M144.5 211v1M145.5 210v1M146.5 209v1M147.5 208v1M149.5 208v4"/>
<path class="tick-Venu" stroke="#fff" d="M193.5 413v3M194.5 416v5M195.5 421v4M196.5 425v5M197.5 430v3"/>
<path class="glyph-Venu" stroke="#0f0" d="M188 434.5h5M188 442.5h5M186 446.5h9M186.5 436v5M187.5 435v1M187.5 441v1M190.5 443v3M190.5 447v4M193.5 435v1M193.5 441v1M194.5 436v5"/>
<path class="tick-Merc" stroke="#fff" d="M258.5 449v2M259.5 451v3M260.5 454v2M261.5 456v3M262.5 459v3M263.5 462v2"/>
<path class="glyph-Merc" stroke="#0f0" d="M258 468.5h5M258 476.5h5M256 480.5h9M256.5 466v1M256.5 470v5M257.5 467v1M257.5 469v1M257.5 475v1M260.5 477v3M260.5 481v2M263.5 467v1M263.5 469v1M263.5 475v1M264.5 466v1M264.5 470v5"/>
<path class="tick-Moon" stroke="#fff" d="M240 145.5h2M246 150.5h2M238.5 143v1M239.5 144v1M242.5 146v1M243.5 147v1M244.5 148v1M245.5 149v1M248.5 151v1M249.5 152v1"/>
<path class="glyph-Moon" stroke="#00f" d="M230 124.5h5M235 125.5h2M235 139.5h2M230 140.5h5M228.5 126v1M228.5 138v1M229.5 125v1M229.5 127v1M229.5 137v1M229.5 139v1M230.5 128v1M230.5 136v1M231.5 129v2M231.5 134v2M232.5 131v3M237.5 126v1M237.5 138v1M238.5 127v1M238.5 137v1M239.5 128v2M239.5 135v2M240.5 130v5"/>
<path class="tick-Sun" stroke="#fff" d="M236 445.5h2M231 449.5h2M229.5 451v1M230.5 450v1M233.5 448v1M234.5 447v1M235.5 446v1M238.5 444v1M239.5 443v1"/>
<path class="glyph-Sun" stroke="#f00" d="M222 454.5h5M220 455.5h2M227 455.5h2M220 469.5h2M227 469.5h2M222 470.5h5M216.5 460v5M217.5 458v2M217.5 465v2M218.5 457v1M218.5 467v1M219.5 456v1M219.5 468v1M224.5 462v1M229.5 456v1M229.5 468v1M230.5 457v1M230.5 467v1M231.5 458v2M231.5 465v2M232.5 460v5"/>
<path class="dot-Sun" stroke="#f00" d="M241.5 437v1"/>
<path class="dot-Moon" stroke="#00f" d="M251.5 157v1"/>
<path class="dot-Merc" stroke="#0f0" d="M260.5 443v1"/>
<path class="dot-Venu" stroke="#0f0" d="M197.5 408v1"/>
<path class="dot-Mars" stroke="#f00" d="M167.5 228v1"/>
<path class="dot-Jupi" stroke="#f00" d="M211.5 178v1"/>
<path class="dot-Satu" stroke="#ff0" d="M149.5 297v1"/>
<path class="dot-Uran" stroke="#0f0" d="M253.5 441v1"/>
<path class="dot-Nept" stroke="#00f" d="M336.5 444v1"/>
<path class="dot-Plut" stroke="#00f" d="M193.5 405v1"/>
<path class="dot-Node" stroke="#007f7f" d="M191.5 403v1"/>
<path class="dot-Asc" stroke="#f00" d="M155.5 341v1"/>
<path class="dot-MC" stroke="#ff0" d="M257.5 155v1"/>
<path class="asp-Asc-MC" stroke="#f00" d="M161.5 339v1M162.5 337v2M163.5 335v2M164.5 333v2M165.5 331v2M166.5 330v1M167.5 328v2M168.5 326v2M169.5 324v2M170.5 322v2M171.5 320v2M172.5 319v1M173.5 317v2M174.5 315v2M175.5 313v2M176.5 311v2M177.5 310v1M178.5 308v2M179.5 306v2M180.5 304v2M181.5 302v2M182.5 300v2M183.5 299v1M184.5 297v2M185.5 295v2M186.5 293v2M187.5 291v2M188.5 290v1M189.5 288v2M190.5 286v2M191.5 284v2M192.5 282v2M193.5 280v2M194.5 279v1M195.5 277v2M196.5 275v2M197.5 273v2M198.5 271v2M199.5 270v1M200.5 268v2M201.5 266v2M202.5 264v2M203.5 262v2M204.5 260v2M205.5 259v1M206.5 257v2M207.5 255v2M208.5 253v2M209.5 251v2M210.5 250v1M211.5 248v2M212.5 246v2M213.5 244v2M214.5 242v2M215.5 241v1M216.5 239v2M217.5 237v2M218.5 235v2M219.5 233v2M220.5 231v2M221.5 230v1M222.5 228v2M223.5 226v2M224.5 224v2M225.5 222v2M226.5 221v1M227.5 219v2M228.5 217v2M229.5 215v2M230.5 213v2M231.5 211v2M232.5 210v1M233.5 208v2M234.5 206v2M235.5 204v2M236.5 202v2M237.5 201v1M238.5 199v2M239.5 197v2M240.5 195v2M241.5 193v2M242.5 191v2M243.5 190v1M244.5 188v2M245.5 186v2M246.5 184v2M247.5 182v2M248.5 181v1M249.5 179v2M250.5 177v2M251.5 175v2M252.5 173v2M253.5 171v2M254.5 170v1M255.5 168v2M256.5 166v2M257.5 164v2M258.5 162v2M259.5 161v1"/>
<path class="asp-Plut-MC" stroke="#0f0" d="M198.5 399v2M199.5 395v4M200.5 391v4M201.5 387v4M202.5 383v4M203.5 379v4M204.5 375v4M205.5 371v4M206.5 367v4M207.5 363v4M208.5 359v4M209.5 355v4M210.5 352v3M211.5 348v4M212.5 344v4M213.5 340v4M214.5 336v4M215.5 332v4M216.5 328v4M217.5 324v4M218.5 320v4M219.5 316v4M220.5 312v4M221.5 308v4M222.5 305v3M223.5 301v4M224.5 297v4M225.5 293v4M226.5 289v4M227.5 285v4M228.5 281v4M229.5 277v4M230.5 273v4M231.5 269v4M232.5 265v4M233.5 261v4M234.5 257v4M235.5 254v3M236.5 250v4M237.5 246v4M238.5 242v4M239.5 238v4M240.5 234v4M241.5 230v4M242.5 226v4M243.5 222v4M244.5 218v4M245.5 214v4M246.5 210v4M247.5 207v3M248.5 203v4M249.5 199v4M250.5 195v4M251.5 191v4M252.5 187v4M253.5 183v4M254.5 179v4M255.5 175v4M256.5 171v4M257.5 167v4M258.5 163v4M259.5 161v2"/>
<path class="asp-Venu-MC" stroke="#0f0" d="M201.5 402v3M202.5 398v4M203.5 394v4M204.5 390v4M205.5 386v4M206.5 381v5M207.5 377v4M208.5 373v4M209.5 369v4M210.5 365v4M211.5 361v4M212.5 356v5M213.5 352v4M214.5 348v4M215.5 344v4M216.5 340v4M217.5 335v5M218.5 331v4M219.5 327v4M220.5 323v4M221.5 319v4M222.5 314v5M223.5 310v4M224.5 306v4M225.5 302v4M226.5 298v4M227.5 293v5M228.5 289v4M229.5 285v4M230.5 281v4M231.5 277v4M232.5 273v4M233.5 268v5M234.5 264v4M235.5 260v4M236.5 256v4M237.5 252v4M238.5 247v5M239.5 243v4M240.5 239v4M241.5 235v4M242.5 231v4M243.5 226v5M244.5 222v4M245.5 218v4M246.5 214v4M247.5 210v4M248.5 205v5M249.5 201v4M250.5 197v4M251.5 193v4M252.5 189v4M253.5 185v4M254.5 180v5M255.5 176v4M256.5 172v4M257.5 168v4M258.5 164v4M259.5 161v3"/>
<path class="asp-Moon-MC" stroke="#ff0" d="M253.5 163v1M255.5 162v1M257.5 162v1M259.5 161v1"/>
<path class="asp-Nept-Asc" stroke="#f00" d="M162 340.5h2M164 341.5h2M166 342.5h2M169 344.5h2M171 345.5h2M173 346.5h2M176 348.5h2M178 349.5h2M180 350.5h2M183 352.5h2M185 353.5h2M187 354.5h2M190 356.5h2M192 357.5h2M194 358.5h2M196 359.5h2M199 361.5h2M201 362.5h2M203 363.5h2M206 365.5h2M208 366.5h2M210 367.5h2M213 369.5h2M215 370.5h2M217 371.5h2M220 373.5h2M222 374.5h2M224 375.5h2M227 377.5h2M229 378.5h2M231 379.5h2M234 381.5h2M236 382.5h2M238 383.5h2M241 385.5h2M243 386.5h2M245 387.5h2M248 389.5h2M250 390.5h2M252 391.5h2M254 392.5h2M257 394.5h2M259 395.5h2M261 396.5h2M264 398.5h2M266 399.5h2M268 400.5h2M271 402.5h2M273 403.5h2M275 404.5h2M278 406.5h2M280 407.5h2M282 408.5h2M285 410.5h2M287 411.5h2M289 412.5h2M292 414.5h2M294 415.5h2M296 416.5h2M299 418.5h2M301 419.5h2M303 420.5h2M306 422.5h2M308 423.5h2M310 424.5h2M312 425.5h2M315 427.5h2M317 428.5h2M319 429.5h2M322 431.5h2M324 432.5h2M326 433.5h2M329 435.5h2M331 436.5h2M333 437.5h2M161.5 339v1M168.5 343v1M175.5 347v1M182.5 351v1M189.5 355v1M198.5 360v1M205.5 364v1M212.5 368v1M219.5 372v1M226.5 376v1M233.5 380v1M240.5 384v1M247.5 388v1M256.5 393v1M263.5 397v1M270.5 401v1M277.5 405v1M284.5 409v1M291.5 413v1M298.5 417v1M305.5 421v1M314.5 426v1M321.5 430v1M328.5 434v1M335.5 438v1"/>
<path class="asp-Moon-Asc" stroke="#f00" d="M161.5 339v1M162.5 337v1M163.5 335v1M164.5 333v1M165.5 331v1M166.5 329v1M167.5 327v1M168.5 325v1M169.5 323v1M170.5 321v1M171.5 319v1M172.5 317v1M174.5 315v1M175.5 313v1M176.5 311v1M177.5 309v1M178.5 307v1M179.5 305v1M180.5 303v1M181.5 301v1M182.5 299v1M183.5 297v1M184.5 295v1M185.5 293v1M186.5 291v1M187.5 289v1M188.5 287v1M189.5 285v1M190.5 283v1M191.5 281v1M192.5 279v1M193.5 277v1M194.5 275v1M195.5 273v1M197.5 271v1M198.5 269v1M199.5 267v1M200.5 265v1M201.5 263v1M202.5 261v1M203.5 259v1M204.5 257v1M205.5 255v1M206.5 253v1M207.5 251v1M208.5 249v1M209.5 247v1M210.5 245v1M211.5 243v1M212.5 241v1M213.5 239v1M214.5 237v1M215.5 235v1M216.5 233v1M217.5 231v1M218.5 229v1M220.5 227v1M221.5 225v1M222.5 223v1M223.5 221v1M224.5 219v1M225.5 217v1M226.5 215v1M227.5 213v1M228.5 211v1M229.5 209v1M230.5 207v1M231.5 205v1M232.5 203v1M233.5 201v1M234.5 199v1M235.5 197v1M236.5 195v1M237.5 193v1M238.5 191v1M239.5 189v1M240.5 187v1M241.5 185v1M243.5 183v1M244.5 181v1M245.5 179v1M246.5 177v1M247.5 175v1M248.5 173v1M249.5 171v1M250.5 169v1M251.5 167v1M252.5 165v1M253.5 163v1"/>
<path class="asp-Plut-Node" stroke="#ff0" d="M196.5 398v1M197.5 399v1M198.5 400v1"/>
<path class="asp-Venu-Node" stroke="#ff0" d="M196.5 398v1M198.5 400v1M199.5 402v1M201.5 404v1"/>
<path class="asp-Nept-Plut" stroke="#0ff" d="M198 400.5h2M200 401.5h4M204 402.5h4M208 403.5h3M211 404.5h4M215 405.5h3M218 406.5h4M222 407.5h4M226 408.5h3M229 409.5h4M233 410.5h3M236 411.5h4M240 412.5h4M244 413.5h3M247 414.5h4M251 415.5h3M254 416.5h4M258 417.5h4M262 418.5h3M265 419.5h4M269 420.5h3M272 421.5h4M276 422.5h4M280 423.5h3M283 424.5h4M287 425.5h3M290 426.5h4M294 427.5h4M298 428.5h3M301 429.5h4M305 430.5h3M308 431.5h4M312 432.5h4M316 433.5h3M319 434.5h4M323 435.5h3M326 436.5h4M330 437.5h4M334 438.5h2"/>
<path class="asp-Venu-Plut" stroke="#ff0" d="M198.5 400v1M200.5 402v1M201.5 404v1"/>
<path class="asp-Moon-Plut" stroke="#0f0" d="M198.5 399v1M199.5 395v1M199.5 397v1M200.5 391v1M200.5 393v1M201.5 385v1M201.5 387v1M201.5 389v1M202.5 381v1M202.5 383v1M203.5 377v1M203.5 379v1M204.5 373v1M204.5 375v1M205.5 369v1M205.5 371v1M206.5 365v1M206.5 367v1M207.5 361v1M207.5 363v1M208.5 355v1M208.5 357v1M208.5 359v1M209.5 351v1M209.5 353v1M210.5 347v1M210.5 349v1M211.5 343v1M211.5 345v1M212.5 339v1M212.5 341v1M213.5 335v1M213.5 337v1M214.5 329v1M214.5 331v1M214.5 333v1M215.5 325v1M215.5 327v1M216.5 321v1M216.5 323v1M217.5 317v1M217.5 319v1M218.5 313v1M218.5 315v1M219.5 309v1M219.5 311v1M220.5 305v1M220.5 307v1M221.5 299v1M221.5 301v1M221.5 303v1M222.5 295v1M222.5 297v1M223.5 291v1M223.5 293v1M224.5 287v1M224.5 289v1M225.5 283v1M225.5 285v1M226.5 279v1M226.5 281v1M227.5 273v1M227.5 275v1M227.5 277v1M228.5 269v1M228.5 271v1M229.5 265v1M229.5 267v1M230.5 261v1M230.5 263v1M231.5 257v1M231.5 259v1M232.5 253v1M232.5 255v1M233.5 249v1M233.5 251v1M234.5 243v1M234.5 245v1M234.5 247v1M235.5 239v1M235.5 241v1M236.5 235v1M236.5 237v1M237.5 231v1M237.5 233v1M238.5 227v1M238.5 229v1M239.5 223v1M239.5 225v1M240.5 217v1M240.5 219v1M240.5 221v1M241.5 213v1M241.5 215v1M242.5 209v1M242.5 211v1M243.5 205v1M243.5 207v1M244.5 201v1M244.5 203v1M245.5 197v1M245.5 199v1M246.5 193v1M246.5 195v1M247.5 187v1M247.5 189v1M247.5 191v1M248.5 183v1M248.5 185v1M249.5 179v1M249.5 181v1M250.5 175v1M250.5 177v1M251.5 171v1M251.5 173v1M252.5 167v1M252.5 169v1M253.5 163v1M253.5 165v1"/>
<path class="asp-Venu-Nept" stroke="#0ff" d="M201.5 404v1M203.5 405v1M205.5 405v1M207.5 406v1M209.5 406v1M211.5 407v1M213.5 407v1M215.5 408v1M217.5 408v1M219.5 409v1M221.5 409v1M223.5 410v1M225.5 410v1M227.5 411v1M229.5 411v1M231.5 412v1M233.5 412v1M235.5 413v1M237.5 413v1M239.5 414v1M241.5 414v1M243.5 415v1M245.5 415v1M247.5 416v1M249.5 416v1M251.5 417v1M253.5 417v1M255.5 418v1M257.5 418v1M259.5 419v1M261.5 419v1M263.5 420v1M265.5 420v1M267.5 421v1M269.5 421v1M271.5 422v1M273.5 422v1M275.5 423v1M277.5 423v1M279.5 424v1M281.5 424v1M283.5 425v1M285.5 425v1M287.5 426v1M289.5 426v1M291.5 427v1M293.5 427v1M295.5 428v1M297.5 428v1M299.5 429v1M301.5 429v1M303.5 430v1M305.5 430v1M307.5 431v1M309.5 431v1M311.5 432v1M313.5 432v1M315.5 433v1M317.5 433v1M319.5 434v1M321.5 434v1M323.5 435v1M325.5 435v1M327.5 436v1M329.5 436v1M331.5 437v1M333.5 437v1M335.5 438v1"/>
<path class="asp-Moon-Nept" stroke="#00f" d="M253.5 163v1M254.5 166v1M255.5 169v1M256.5 172v1M257.5 175v1M257.5 178v1M258.5 181v1M259.5 184v1M260.5 187v1M261.5 190v1M262.5 193v1M263.5 196v1M264.5 199v1M265.5 202v1M266.5 205v1M266.5 208v1M267.5 211v1M268.5 214v1M269.5 217v1M270.5 220v1M271.5 223v1M272.5 226v1M273.5 229v1M274.5 232v1M274.5 235v1M275.5 238v1M276.5 241v1M277.5 244v1M278.5 247v1M279.5 250v1M280.5 253v1M281.5 256v1M282.5 259v1M283.5 262v1M283.5 265v1M284.5 268v1M285.5 271v1M286.5 274v1M287.5 277v1M288.5 280v1M289.5 283v1M290.5 286v1M291.5 289v1M291.5 292v1M292.5 295v1M293.5 298v1M294.5 301v1M295.5 304v1M296.5 307v1M297.5 310v1M298.5 313v1M299.5 316v1M300.5 319v1M300.5 322v1M301.5 325v1M302.5 328v1M303.5 331v1M304.5 334v1M305.5 337v1M306.5 340v1M307.5 343v1M308.5 346v1M308.5 349v1M309.5 352v1M310.5 355v1M311.5 358v1M312.5 361v1M313.5 364v1M314.5 367v1M315.5 370v1M316.5 373v1M317.5 376v1M317.5 379v1M318.5 382v1M319.5 385v1M320.5 388v1M321.5 391v1M322.5 394v1M323.5 397v1M324.5 400v1M325.5 403v1M325.5 406v1M326.5 409v1M327.5 412v1M328.5 415v1M329.5 418v1M330.5 421v1M331.5 424v1M332.5 427v1M333.5 430v1M334.5 433v1M334.5 436v1"/>
<path class="asp-Jupi-Uran" stroke="#0f0" d="M215.5 183v1M215.5 186v1M216.5 189v1M216.5 192v1M217.5 195v1M217.5 198v1M218.5 201v1M218.5 204v1M219.5 207v1M219.5 210v1M220.5 213v1M220.5 216v1M221.5 219v1M221.5 222v1M222.5 225v1M222.5 228v1M222.5 231v1M223.5 234v1M223.5 237v1M224.5 240v1M224.5 243v1M225.5 246v1M225.5 249v1M226.5 252v1M226.5 255v1M227.5 258v1M227.5 261v1M228.5 264v1M228.5 267v1M228.5 270v1M229.5 273v1M229.5 276v1M230.5 279v1M230.5 282v1M231.5 285v1M231.5 288v1M232.5 291v1M232.5 294v1M233.5 297v1M233.5 300v1M234.5 303v1M234.5 306v1M235.5 309v1M235.5 312v1M235.5 315v1M236.5 318v1M236.5 321v1M237.5 324v1M237.5 327v1M238.5 330v1M238.5 333v1M239.5 336v1M239.5 339v1M240.5 342v1M240.5 345v1M241.5 348v1M241.5 351v1M241.5 354v1M242.5 357v1M242.5 360v1M243.5 363v1M243.5 366v1M244.5 369v1M244.5 372v1M245.5 375v1M245.5 378v1M246.5 381v1M246.5 384v1M247.5 387v1M247.5 390v1M248.5 393v1M248.5 396v1M248.5 399v1M249.5 402v1M249.5 405v1M250.5 408v1M250.5 411v1M251.5 414v1M251.5 417v1M252.5 420v1M252.5 423v1M253.5 426v1M253.5 429v1M254.5 432v1M254.5 435v1"/>
<path class="asp-Merc-Uran" stroke="#ff0" d="M255.5 435v1M257.5 436v1M259.5 437v1M261.5 438v1"/>
<path class="asp-Sun-Uran" stroke="#ff0" d="M244.5 431v1M247.5 432v1M250.5 433v1M253.5 435v1"/>
<path class="asp-Sun-Jupi" stroke="#0f0" d="M215.5 183v5M216.5 188v8M217.5 196v9M218.5 205v8M219.5 213v9M220.5 222v9M221.5 231v8M222.5 239v9M223.5 248v8M224.5 256v9M225.5 265v8M226.5 273v9M227.5 282v8M228.5 290v9M229.5 299v8M230.5 307v9M231.5 316v9M232.5 325v8M233.5 333v9M234.5 342v8M235.5 350v9M236.5 359v8M237.5 367v9M238.5 376v8M239.5 384v9M240.5 393v9M241.5 402v8M242.5 410v9M243.5 419v8M244.5 427v5"/>
<path class="asp-Sun-Mars" stroke="#f00" d="M174.5 233v1M175.5 236v1M176.5 239v1M177.5 242v1M178.5 245v1M179.5 248v1M180.5 251v1M181.5 254v1M182.5 257v1M183.5 260v1M184.5 263v1M185.5 266v1M186.5 269v1M188.5 272v1M189.5 275v1M190.5 278v1M191.5 281v1M192.5 284v1M193.5 287v1M194.5 290v1M195.5 293v1M196.5 296v1M197.5 299v1M198.5 302v1M199.5 305v1M200.5 308v1M201.5 311v1M202.5 314v1M204.5 317v1M205.5 320v1M206.5 323v1M207.5 326v1M208.5 329v1M209.5 332v1M210.5 335v1M211.5 338v1M212.5 341v1M213.5 344v1M214.5 347v1M215.5 350v1M216.5 353v1M217.5 356v1M218.5 359v1M220.5 362v1M221.5 365v1M222.5 368v1M223.5 371v1M224.5 374v1M225.5 377v1M226.5 380v1M227.5 383v1M228.5 386v1M229.5 389v1M230.5 392v1M231.5 395v1M232.5 398v1M233.5 401v1M234.5 404v1M235.5 407v1M237.5 410v1M238.5 413v1M239.5 416v1M240.5 419v1M241.5 422v1M242.5 425v1M243.5 428v1M244.5 431v1"/>
<path class="asp-Moon-Venu" stroke="#0f0" d="M201.5 402v3M202.5 398v4M203.5 393v5M204.5 388v5M205.5 384v4M206.5 379v5M207.5 374v5M208.5 370v4M209.5 365v5M210.5 360v5M211.5 356v4M212.5 351v5M213.5 347v4M214.5 342v5M215.5 337v5M216.5 333v4M217.5 328v5M218.5 323v5M219.5 319v4M220.5 314v5M221.5 309v5M222.5 305v4M223.5 300v5M224.5 296v4M225.5 291v5M226.5 286v5M227.5 282v4M228.5 277v5M229.5 272v5M230.5 268v4M231.5 263v5M232.5 259v4M233.5 254v5M234.5 249v5M235.5 245v4M236.5 240v5M237.5 235v5M238.5 231v4M239.5 226v5M240.5 221v5M241.5 217v4M242.5 212v5M243.5 208v4M244.5 203v5M245.5 198v5M246.5 194v4M247.5 189v5M248.5 184v5M249.5 180v4M250.5 175v5M251.5 170v5M252.5 166v4M253.5 163v3"/>
<path class="asp-Sun-Merc" stroke="#ff0" d="M244.5 431v1M248.5 433v1M252.5 434v1M256.5 436v1M260.5 438v1"/>
<path class="sb-sign" stroke="#f00" d="M749 108.5h3M744.5 106v1M745.5 107v7M746.5 106v1M747.5 107v7M748.5 106v1M749.5 107v1M749.5 109v4M749.5 114v1M750.5 113v1M751.5 107v1M751.5 109v4M751.5 114v1"/>
<path class="sb-sign" stroke="#ff0" d="M747 118.5h3M744 121.5h4M749 121.5h4M744 123.5h9M746.5 119v2M750.5 119v2"/>
<path class="sb-sign" stroke="#0f0" d="M750 134.5h2M744.5 126v1M745.5 127v7M746.5 126v1M747.5 127v7M748.5 126v1M749.5 127v7M752.5 132v2"/>
<path class="sb-sign" stroke="#00f" d="M750 136.5h3M751 137.5h2M744.5 144v1M745.5 139v1M745.5 143v1M746.5 140v1M746.5 142v1M747.5 141v1M748.5 140v1M748.5 142v1M749.5 139v1M749.5 143v1M750.5 138v1M752.5 138v1"/>
<path class="sb-sign" stroke="#f00" d="M750 146.5h2M744 147.5h2M748 147.5h2M750 149.5h2M745.5 146v1M745.5 148v3M746.5 151v3M747.5 148v3M748.5 146v1M749.5 148v1M751.5 150v1M751.5 154v1M752.5 147v2M752.5 151v3"/>
<path class="sb-sign" stroke="#ff0" d="M745 157.5h2M748 157.5h2M747 158.5h2M750 158.5h2M745 162.5h2M748 162.5h2M747 163.5h2M750 163.5h2M744.5 159v1M744.5 164v1M745.5 158v1M745.5 163v1M746.5 156v1M746.5 161v1M747.5 159v1M747.5 164v1M749.5 156v1M749.5 161v1M750.5 159v1M750.5 164v1M751.5 157v1M751.5 162v1M752.5 156v1M752.5 161v1"/>
<path class="sb-sign" stroke="#0f0" d="M744 170.5h9M744.5 166v1M744.5 174v1M745.5 167v1M745.5 173v1M746.5 168v2M746.5 171v2M750.5 168v2M750.5 171v2M751.5 167v1M751.5 173v1M752.5 166v1M752.5 174v1"/>
<path class="sb-sign" stroke="#00f" d="M745 176.5h2M750 176.5h2M744.5 177v2M745.5 179v1M747.5 177v3M748.5 180v5M749.5 177v3M751.5 179v1M752.5 177v2"/>
<path class="sb-sign" stroke="#f00" d="M747 188.5h3M747 194.5h3M745.5 186v1M745.5 190v3M746.5 187v1M746.5 189v1M746.5 193v1M750.5 187v1M750.5 189v1M750.5 193v1M751.5 186v1M751.5 190v3"/>
<path class="sb-sign" stroke="#ff0" d="M746 197.5h6M746 203.5h6M745.5 196v1M745.5 204v1M747.5 198v5M750.5 198v5M752.5 196v1M752.5 204v1"/>
<path class="sb-sign" stroke="#0f0" d="M747 207.5h3M745 208.5h2M750 208.5h2M745 210.5h2M750 211.5h2M745 213.5h2M750 213.5h2M747 214.5h3M744.5 209v1M744.5 211v2M747.5 211v2M749.5 209v2M752.5 209v2M752.5 212v1"/>
<path class="sb-sign" stroke="#00f" d="M747 216.5h3M744.5 222v1M745.5 218v3M745.5 223v1M746.5 217v1M746.5 221v2M750.5 217v1M750.5 221v2M751.5 218v3M751.5 223v1M752.5 224v1"/>
<path class="sb-obj" stroke="#f00" d="M747 236.5h3M745 237.5h2M750 237.5h2M745 243.5h2M750 243.5h2M747 244.5h3M744.5 239v3M745.5 238v1M745.5 242v1M748.5 240v1M751.5 238v1M751.5 242v1M752.5 239v3"/>
<path class="sb-obj" stroke="#00f" d="M746 246.5h3M749 247.5h2M749 253.5h2M746 254.5h3M745.5 247v1M745.5 253v1M746.5 248v1M746.5 252v1M747.5 249v3M750.5 248v1M750.5 252v1M751.5 249v3"/>
<path class="sb-obj" stroke="#0f0" d="M747 257.5h3M747 261.5h3M746 263.5h5M746.5 256v1M746.5 258v3M748.5 262v1M748.5 264v1M750.5 256v1M750.5 258v3"/>
<path class="sb-obj" stroke="#0f0" d="M747 266.5h3M747 270.5h3M746 272.5h5M746.5 267v3M748.5 271v1M748.5 273v2M750.5 267v3"/>
<path class="sb-obj" stroke="#f00" d="M750 276.5h3M751 277.5h2M746 279.5h2M746 284.5h2M744.5 281v2M745.5 280v1M745.5 283v1M748.5 280v1M748.5 283v1M749.5 279v1M749.5 281v2M750.5 278v1M752.5 278v1"/>
<path class="sb-obj" stroke="#f00" d="M745 287.5h2M745 293.5h8M745.5 292v1M746.5 290v2M747.5 288v2M750.5 287v6M750.5 294v1M751.5 286v1"/>
<path class="sb-obj" stroke="#ff0" d="M745 297.5h5M749 299.5h2M747 300.5h2M747.5 296v1M747.5 298v2M747.5 301v3M750.5 302v2M751.5 300v2M751.5 304v1"/>
<path class="sb-obj" stroke="#0f0" d="M746 309.5h5M747 312.5h3M745.5 306v1M745.5 311v1M746.5 307v2M746.5 310v1M747.5 313v1M748.5 308v1M748.5 310v2M748.5 314v1M749.5 313v1M750.5 307v2M750.5 310v1M751.5 306v1M751.5 311v1"/>
<path class="sb-obj" stroke="#00f" d="M744 317.5h2M747 317.5h3M751 317.5h2M747 320.5h3M746 322.5h5M745.5 316v1M745.5 318v1M746.5 319v1M748.5 316v1M748.5 318v2M748.5 321v1M748.5 323v2M750.5 319v1M751.5 316v1M751.5 318v1"/>
<path class="sb-obj" stroke="#00f" d="M747 330.5h3M746 332.5h5M745.5 326v3M746.5 329v1M747.5 327v1M748.5 326v1M748.5 328v1M748.5 331v1M748.5 333v2M749.5 327v1M750.5 329v1M751.5 326v3"/>
<path class="sb-obj" stroke="#007f7f" d="M747 336.5h3M745 342.5h2M750 342.5h2M744.5 343v1M745.5 338v3M745.5 344v1M746.5 337v1M746.5 341v1M746.5 343v1M750.5 337v1M750.5 341v1M750.5 343v1M751.5 338v3M751.5 344v1M752.5 343v1"/>
<text class="hn" transform="translate(96.5 358.0) scale(0.85 1)" x="0.00" fill="#f00" stroke="#f00">1</text>
<text class="hn" transform="translate(151.5 452.0) scale(0.85 1)" x="0.00" fill="#ff0" stroke="#ff0">2</text>
<text class="hn" transform="translate(245.5 507.0) scale(0.85 1)" x="0.00" fill="#0f0" stroke="#0f0">3</text>
<text class="hn" transform="translate(353.5 507.0) scale(0.85 1)" x="0.00" fill="#00f" stroke="#00f">4</text>
<text class="hn" transform="translate(447.5 452.0) scale(0.85 1)" x="0.00" fill="#f00" stroke="#f00">5</text>
<text class="hn" transform="translate(502.5 358.0) scale(0.85 1)" x="0.00" fill="#ff0" stroke="#ff0">6</text>
<text class="hn" transform="translate(502.5 250.0) scale(0.85 1)" x="0.00" fill="#0f0" stroke="#0f0">7</text>
<text class="hn" transform="translate(447.5 156.0) scale(0.85 1)" x="0.00" fill="#00f" stroke="#00f">8</text>
<text class="hn" transform="translate(353.5 101.0) scale(0.85 1)" x="0.00" fill="#f00" stroke="#f00">9</text>
<text class="hn" transform="translate(241.5 101.0) scale(0.85 1)" x="0.00 9.41" fill="#ff0" stroke="#ff0">10</text>
<text class="hn" transform="translate(147.5 156.0) scale(0.85 1)" x="0.00 9.41" fill="#0f0" stroke="#0f0">11</text>
<text class="hn" transform="translate(92.5 250.0) scale(0.85 1)" x="0.00 9.41" fill="#00f" stroke="#00f">12</text>
<text class="lb2" transform="translate(242.3 134.8) scale(1 1.88)" fill="#ff0" stroke="#ff0"><tspan x="0.00" textLength="11.90" lengthAdjust="spacingAndGlyphs">M</tspan><tspan x="13.20" textLength="6.00" lengthAdjust="spacingAndGlyphs">C</tspan></text>
<text class="lb2" transform="translate(118.9 358.8) scale(1 1.88)" fill="#f00" stroke="#f00"><tspan x="0.00" textLength="5.20" lengthAdjust="spacingAndGlyphs">A</tspan><tspan x="6.40" textLength="6.30" lengthAdjust="spacingAndGlyphs">s</tspan><tspan x="12.50" textLength="6.20" lengthAdjust="spacingAndGlyphs">c</tspan></text>
</svg>
<pre id="side"><span style="color:#fff">Astrolog 5.40</span>
"Anonymous"
Mon October 31, 1977
 2:20am (ST +8:00 GMT)
"Taiwan"
121°18E 22°59N
Whole houses.
Tropical, Geocentric.
Julian Day = 2443447.2639

<span style="color:#f00"> 1st house: </span><span style="color:#ff0"> 0Vir00</span>
<span style="color:#ff0"> 2nd house: </span><span style="color:#0f0"> 0Lib00</span>
<span style="color:#0f0"> 3rd house: </span><span style="color:#00f"> 0Sco00</span>
<span style="color:#00f"> 4th house: </span><span style="color:#f00"> 0Sag00</span>
<span style="color:#f00"> 5th house: </span><span style="color:#ff0"> 0Cap00</span>
<span style="color:#ff0"> 6th house: </span><span style="color:#0f0"> 0Aqu00</span>
<span style="color:#0f0"> 7th house: </span><span style="color:#00f"> 0Pis00</span>
<span style="color:#00f"> 8th house: </span><span style="color:#f00"> 0Ari00</span>
<span style="color:#f00"> 9th house: </span><span style="color:#ff0"> 0Tau00</span>
<span style="color:#ff0">10th house: </span><span style="color:#0f0"> 0Gem00</span>
<span style="color:#0f0">11th house: </span><span style="color:#00f"> 0Can00</span>
<span style="color:#00f">12th house: </span><span style="color:#f00"> 0Leo00</span>

<span style="color:#f00"> Sun: </span><span style="color:#00f"> 7Sco13</span><span style="color:#fff"> </span> - 0°00'
<span style="color:#00f">Moon: </span><span style="color:#0f0">18Gem58</span><span style="color:#fff"> </span> - 4°42'
<span style="color:#0f0">Merc: </span><span style="color:#00f">14Sco39</span><span style="color:#fff"> </span> - 0°30'
<span style="color:#0f0">Venu: </span><span style="color:#0f0">17Lib01</span><span style="color:#fff"> </span> + 1°34'
<span style="color:#f00">Mars: </span><span style="color:#f00"> 1Leo40</span><span style="color:#fff"> </span> + 1°25'
<span style="color:#f00">Jupi: </span><span style="color:#00f"> 6Can04</span><span style="color:#fff">R</span> - 0°21'
<span style="color:#ff0">Satu: </span><span style="color:#f00">28Leo59</span><span style="color:#fff"> </span> + 1°12'
<span style="color:#0f0">Uran: </span><span style="color:#00f">11Sco48</span><span style="color:#fff"> </span> + 0°23'
<span style="color:#00f">Nept: </span><span style="color:#f00">14Sag30</span><span style="color:#fff"> </span> + 1°26'
<span style="color:#00f">Plut: </span><span style="color:#0f0">14Lib59</span><span style="color:#fff"> </span> +16°34'
<span style="color:#007f7f">Node: </span><span style="color:#0f0">13Lib51</span><span style="color:#fff">R</span> + 0°00'

Fire: 3, Earth: 1,
Air : 5, Water: 4
Car: 4, Fix: 5, Mut: 4
Yang: 8, Yin: 5
M: 4, N: 7, A: 10, D: 1
Ang: 2, Suc: 4, Cad: 5
Learn: 6, Share: 7</pre>
</div>
</body></html>
